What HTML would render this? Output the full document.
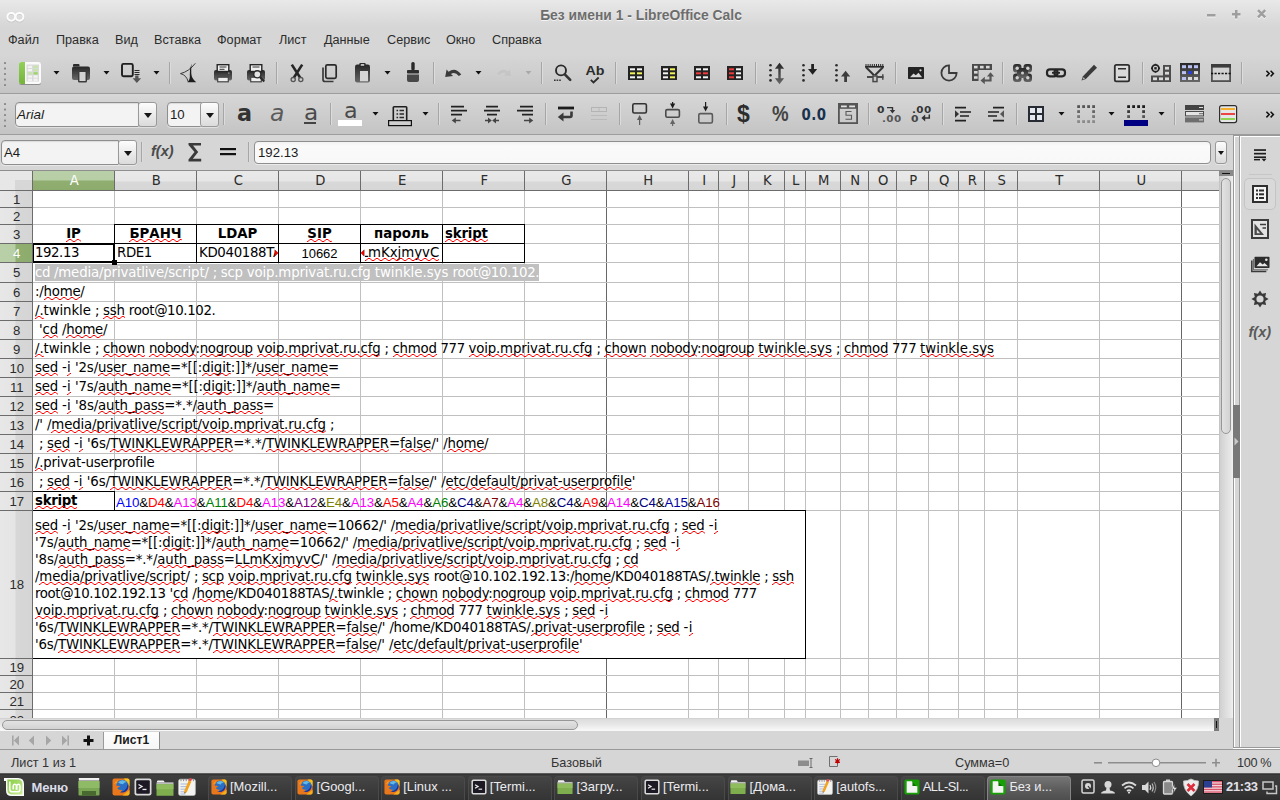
<!DOCTYPE html>
<html lang="ru">
<head>
<meta charset="utf-8">
<title>Без имени 1 - LibreOffice Calc</title>
<style>
html,body{margin:0;padding:0;width:1280px;height:800px;overflow:hidden;background:#d6d6d6;}
#root{position:relative;width:1280px;height:800px;overflow:hidden;background:#d6d6d6;
  font-family:"Liberation Sans","DejaVu Sans",sans-serif;font-size:13px;color:#2b2b2b;}
#root div,#root span,#root svg{position:absolute;box-sizing:border-box;}
#root span.i{position:static;}
.t{white-space:nowrap;line-height:1;}
.ui{font-family:"Liberation Sans","DejaVu Sans",sans-serif;font-size:13.2px;color:#2e2e2e;}
</style>
<style>
#title{left:0;top:0;width:1280px;height:28px;background:linear-gradient(#e9e9e9 0,#e3e3e3 8px,#d8d8d8 24px,#d6d6d6 28px);}
#title .cap{left:1px;width:1280px;top:8.5px;text-align:center;font-weight:bold;font-size:13.85px;color:#6d6d6d;text-shadow:0 1px 0 #f4f4f4;}
#menubar{left:0;top:28px;width:1280px;height:26px;background:#d6d6d6;}
#menubar .t{top:6px;font-size:12.65px;color:#2c2c2c;}
</style>
<style>
#tb1{left:0;top:54px;width:1280px;height:40px;background:linear-gradient(#d6d6d6 0,#d3d3d3 8px,#c9c9c9 30px,#c4c4c4 39px,#9c9c9c 39px,#9c9c9c 40px);}
#tb1 svg{left:0;top:0;}
</style>
<style>
#tb2{left:0;top:94px;width:1280px;height:41px;background:linear-gradient(#dadada 0,#d6d6d6 1px,#d3d3d3 8px,#c8c8c8 32px,#c4c4c4 40px,#9c9c9c 40px,#9c9c9c 41px);}
#tb2 svg{left:0;top:0;}
.combo{height:25px;background:#f3f3f3;border:1px solid #8e8e8e;border-radius:4px 0 0 4px;box-shadow:inset 0 1px 1px rgba(0,0,0,.10),0 1px 0 rgba(255,255,255,.45);}
.cbtn{height:25px;background:linear-gradient(#fdfdfd,#ededed 45%,#dbdbdb);border:1px solid #999;border-radius:3px;box-shadow:0 1px 0 rgba(255,255,255,.45);}
.cbtn i{position:absolute;left:50%;top:50%;margin:-2px 0 0 -4px;width:0;height:0;border-left:4px solid transparent;border-right:4px solid transparent;border-top:5px solid #151515;}
#tb2 .gl{font-family:"Liberation Sans","DejaVu Sans",sans-serif;line-height:1;white-space:nowrap;}
#tb2 .dj{font-family:"DejaVu Sans","Liberation Sans",sans-serif;}
#tb2 .sf{font-family:"Liberation Serif","DejaVu Serif",serif;}
</style>
<style>
#fbar{left:0;top:135px;width:1233px;height:35px;background:#d6d6d6;}
#fbar svg{left:0;top:0;}
#fbar .inp{left:254px;top:6px;width:957px;height:23px;background:linear-gradient(#f2f2f2,#fafafa 4px,#f8f8f8);border:1px solid #8e8e8e;border-radius:4px;box-shadow:0 1px 0 rgba(255,255,255,.5);}
</style>
<style>
#grid{left:0;top:170px;width:1219px;height:548px;background:#fff;overflow:hidden;}
#colhdr{left:0;top:0;width:1219px;height:21px;background:linear-gradient(#e9e9e9 0,#e6e6e6 10px,#d8d8d8 11px,#d6d6d6 20px);border-top:1px solid #8e8e8e;border-bottom:1px solid #6c6c6c;}
#colhdr .c{top:0;height:19px;text-align:center;text-indent:1.5px;font-size:13.2px;line-height:20px;color:#2c2c2c;border-right:1px solid #6c6c6c;}
#colhdr .sel{background:linear-gradient(#b9cfa7 0,#b8cea5 9px,#8fae70 10px,#8dab6d 19px);color:#fff;}
#rowhdr{left:0;top:21px;width:33px;height:527px;background:linear-gradient(90deg,#e7e7e7 0,#e5e5e5 15px,#d7d7d7 16px,#d5d5d5 32px);border-right:1px solid #6c6c6c;}
#corner{left:0;top:0;width:33px;height:19px;border-right:1px solid #6c6c6c;background:#e7e7e7;}
#corner i{position:absolute;left:15px;top:9px;width:17px;height:10px;background:#d7d7d7;}
#rowhdr .r{left:0;width:32px;text-align:center;text-indent:1.5px;font-size:13.2px;color:#2c2c2c;border-bottom:1px solid #6c6c6c;}
#rowhdr .sel{background:linear-gradient(90deg,#b9cfa7 0,#b8cea5 15px,#8fae70 16px,#8dab6d 32px);color:#fff;}
.gv{top:21px;width:1px;height:527px;background:#c0c0c0;}
.gh{left:33px;height:1px;width:1186px;background:#c0c0c0;}
.pb{top:21px;width:1px;height:527px;background:#666;}
</style>
<style>
#cells{left:0;top:0;width:1219px;height:718px;overflow:hidden;}
.c{font-family:"DejaVu Sans","Liberation Sans",sans-serif;font-size:13.333px;color:#000;white-space:nowrap;height:18px;line-height:18px;overflow:hidden;}
.c u,.w u{text-decoration:none;}
.b{font-weight:bold;}
.ctr{text-align:center;}
.lib{font-family:"Liberation Sans","DejaVu Sans",sans-serif;}
.bk{background:#000;}
.w{font-family:"DejaVu Sans","Liberation Sans",sans-serif;font-size:13.333px;color:#000;white-space:nowrap;line-height:17.1px;}
.hl{background:#c0c0c0;color:#fff;}
</style>
<style>
#hscroll{left:0;top:718px;width:1219px;height:13px;background:linear-gradient(#c9c9c9 0,#dcdcdc 1px,#e6e6e6 6px,#f7f7f7 12px,#f7f7f7 13px);}
#hscroll .thumb{left:2px;top:2px;width:576px;height:10px;border:1px solid #979797;border-radius:5px;background:linear-gradient(#e2e2e2,#d2d2d2);}
#hscroll .split{left:1214px;top:0;width:5px;height:13px;background:#7b7b7b;}
#hscroll .split i{position:absolute;left:2px;top:3px;width:1px;height:7px;background:#111;}
#tabbar{left:0;top:731px;width:1233px;height:19px;background:#d6d6d6;}
#stline{left:0;top:749px;width:1280px;height:1px;background:#999;}
#tabbar .tab{left:103px;top:1px;width:57px;height:17px;background:linear-gradient(#fdfdfd,#f6f6f6);border-left:1px solid #9a9a9a;border-right:1px solid #8a8a8a;box-shadow:0 1px 0 #aaa;text-align:center;font-weight:bold;font-size:12.1px;line-height:16px;color:#1a1a1a;}
#status{left:0;top:750px;width:1280px;height:23px;background:#d6d6d6;}
#status .t{top:6.5px;font-size:12.7px;color:#333;}
</style>
<style>
#vscroll{left:1219px;top:170px;width:14px;height:548px;background:linear-gradient(90deg,#b9b9b9 0,#d0d0d0 1px,#dcdcdc 6px,#e8e8e8 12px,#f2f2f2 14px);}
#vscroll .split{left:0;top:0;width:14px;height:6px;background:#8a8a8a;}
#vscroll .split i{position:absolute;left:3px;top:3px;width:8px;height:1px;background:#111;}
#vscroll .thumb{left:2px;top:8px;width:10px;height:256px;border:1px solid #979797;border-radius:5px;background:linear-gradient(90deg,#e2e2e2,#d2d2d2);}
#vsbelow{left:1219px;top:718px;width:14px;height:31px;background:#d6d6d6;}
#splitter{left:1233px;top:135px;width:7px;height:613px;background:#d6d6d6;border:1px solid #999;box-shadow:inset 1px 1px 0 #fff;}
#splitter .h{left:-1px;top:269px;width:7px;height:73px;background:#787878;}
#sidebar{left:1240px;top:135px;width:40px;height:613px;background:#d6d6d6;border-top:1px solid #999;border-bottom:1px solid #999;box-shadow:inset 1px 1px 0 #fff;}
#sbw{left:1233px;top:748px;width:47px;height:1px;background:#fff;}
#sideic{left:0;top:0;width:0;height:0;}
#sideic .act{left:1244px;top:178px;width:32px;height:32px;border:1px solid #c4c4c4;border-radius:5px;background:#d9d9d9;}
#sideic .sep{left:1249px;top:174px;width:23px;height:1px;background:#c6c6c6;}
</style>
<style>
#task{left:0;top:773px;width:1280px;height:27px;background:linear-gradient(#8a8a8a 0,#2c2c2c 1px,#3d3d3d 2px,#3a3a3a 10px,#333 20px,#2d2d2d 27px);}
#task .btn{top:3px;width:84px;height:24px;border-radius:4px 4px 0 0;background:linear-gradient(#454545,#3c3c3c 50%,#343434);border:1px solid #4a4a4a;border-bottom:none;}
#task .btn.on{background:linear-gradient(#757575,#5e5e5e 50%,#4e4e4e);border-color:#858585;}
#task .lbl{top:7.5px;font-size:12.9px;color:#ececf0;}
#task .menu{left:31.5px;top:7.5px;font-size:13px;font-weight:bold;color:#dcdce8;letter-spacing:-0.1px;}
#task .clk{left:1226px;top:7.5px;font-size:12.9px;font-weight:bold;color:#e2e2ea;letter-spacing:-0.25px;}
</style>
</head>
<body>
<div id="root">
<!-- p_chrome -->
<div id="title">
<svg style="left:5px;top:10px" width="22" height="14" viewBox="0 0 22 14"><g fill="none" stroke-width="2"><g stroke="#bdbdbd" opacity="0.7"><circle cx="6.3" cy="7.7" r="3.9"/><circle cx="14.5" cy="7.7" r="3.9"/></g><g stroke="#fcfcfc"><circle cx="6.3" cy="6.8" r="3.9"/><circle cx="14.5" cy="6.8" r="3.9"/></g></g></svg>
<div class="t cap">Без имени 1 - LibreOffice Calc</div>
<svg style="left:1200px;top:6px" width="72" height="16" viewBox="1200 6 72 16"><g fill="#f2f2f2"><rect x="1207" y="15" width="8.5" height="2.5"/><rect x="1232" y="14" width="8.5" height="2.5"/><rect x="1235" y="11" width="2.5" height="8.5"/></g><path d="M1258 11.2l7.2 7.2M1265.2 11.2l-7.2 7.2" stroke="#f2f2f2" stroke-width="2.5"/><g fill="#9e9e9e"><rect x="1207" y="14" width="8.5" height="2.5"/><rect x="1232" y="13" width="8.5" height="2.5"/><rect x="1235" y="10" width="2.5" height="8.5"/></g><path d="M1258 10.2l7.2 7.2M1265.2 10.2l-7.2 7.2" stroke="#9e9e9e" stroke-width="2.5"/></svg>
</div>
<div id="menubar">
<div class="t" style="left:8px">Файл</div>
<div class="t" style="left:56px">Правка</div>
<div class="t" style="left:115px">Вид</div>
<div class="t" style="left:154px">Вставка</div>
<div class="t" style="left:217px">Формат</div>
<div class="t" style="left:279px">Лист</div>
<div class="t" style="left:324px">Данные</div>
<div class="t" style="left:387px">Сервис</div>
<div class="t" style="left:446px">Окно</div>
<div class="t" style="left:492px">Справка</div>
</div>
<!-- p_tb1 -->
<div id="tb1"><svg width="1280" height="40" viewBox="0 54 1280 40"><defs><linearGradient id="ig" x1="0" y1="0" x2="0" y2="1"><stop offset="0" stop-color="#262626"/><stop offset="1" stop-color="#686868"/></linearGradient><linearGradient id="gg" x1="0" y1="0" x2="0" y2="1"><stop offset="0" stop-color="#93d05a"/><stop offset="1" stop-color="#74b438"/></linearGradient></defs><rect x="4" y="62" width="2" height="2" rx="0.6" fill="#8a8a8a"/><rect x="4" y="67.5" width="2" height="2" rx="0.6" fill="#8a8a8a"/><rect x="4" y="73" width="2" height="2" rx="0.6" fill="#8a8a8a"/><rect x="4" y="78.5" width="2" height="2" rx="0.6" fill="#8a8a8a"/><rect x="4" y="84" width="2" height="2" rx="0.6" fill="#8a8a8a"/><rect x="19" y="62.5" width="22" height="22.5" rx="2.5" fill="#8f8f8f"/><rect x="19" y="62" width="22" height="22" rx="2.5" fill="#fafafa"/><path d="M21.5 62h3.5v22h-3.5a2.5 2.5 0 0 1-2.5-2.5v-17a2.5 2.5 0 0 1 2.5-2.5z" fill="url(#gg)"/><rect x="26.5" y="64.5" width="12.5" height="17" fill="#d9d9d9"/><g fill="#f3f3f3"><rect x="27.8" y="65.8" width="4.2" height="2.3"/><rect x="27.8" y="69" width="4.2" height="2.3"/><rect x="27.8" y="75.4" width="4.2" height="2.3"/><rect x="27.8" y="78.6" width="4.2" height="2.3"/><rect x="33.5" y="75.4" width="4.2" height="2.3"/><rect x="33.5" y="78.6" width="4.2" height="2.3"/></g><g fill="#c5e4a8"><rect x="33.5" y="65.8" width="4.2" height="2.3"/><rect x="33.5" y="69" width="4.2" height="2.3"/><rect x="27.8" y="72.2" width="4.2" height="2.3"/></g><rect x="33.5" y="72.2" width="4.2" height="2.3" fill="#9bd468"/><path d="M53.5 71.1h6l-3 3.5z" fill="#111"/><path d="M73 66.5v-1.5a1 1 0 0 1 1-1h4.5a1 1 0 0 1 1 1v1.5z" fill="#2a2a2a"/><rect x="72" y="66.5" width="18" height="13.5" rx="2" fill="url(#ig)"/><rect x="78.7" y="71.2" width="7.6" height="10.6" rx="0.8" fill="#d4d4d4" stroke="#3c3c3c" stroke-width="1.5"/><path d="M103.5 71.1h6l-3 3.5z" fill="#111"/><rect x="122" y="63.9" width="10.8" height="12.4" rx="1.5" fill="none" stroke="#1e1e1e" stroke-width="1.9"/><path d="M134.5 70.5h5M134.5 72.5h5M134.5 74.5h5" stroke="#2a2a2a" stroke-width="1"/><path d="M135.2 75.5h3.3v2.8h2.6l-4.25 4.7l-4.25-4.7h2.6z" fill="#555"/><path d="M153.5 71.1h6l-3 3.5z" fill="#111"/><path d="M169.5 62V84" stroke="#a6a6a6" stroke-width="1"/><path d="M170.5 62V84" stroke="#dcdcdc" stroke-width="1"/><path d="M180.5 73.6Q189 71.5 195.3 63.3" fill="none" stroke="#2a2a2a" stroke-width="0.9"/><path d="M180.5 73.6Q186.5 75 188.3 82" fill="none" stroke="#2a2a2a" stroke-width="0.9"/><path d="M191.6 63.5Q189.3 69.5 189.8 74.5Q190.3 79.5 187.6 82.2L196.2 82.2Q191.5 78.5 191.3 73.5Q191.1 68.5 191.6 63.5Z" fill="#1c1c1c"/><rect x="214" y="70" width="18" height="10.5" rx="2" fill="url(#ig)"/><rect x="217.2" y="64.7" width="11.6" height="6.8" fill="#f1f1f1" stroke="#262626" stroke-width="1.4"/><path d="M219.5 67h7M219.5 69.3h5" stroke="#333" stroke-width="1"/><rect x="217.7" y="77.2" width="10.6" height="4.6" fill="#efefef" stroke="#444" stroke-width="1.2"/><rect x="228" y="72.5" width="1.5" height="1.2" fill="#999"/><rect x="247" y="70" width="18" height="10.5" rx="2" fill="url(#ig)"/><rect x="250.2" y="64.7" width="11.6" height="6.8" fill="#f1f1f1" stroke="#262626" stroke-width="1.4"/><path d="M252.5 67h7" stroke="#333" stroke-width="1"/><rect x="250.7" y="77.2" width="10.6" height="4.6" fill="#efefef" stroke="#444" stroke-width="1.2"/><circle cx="257.3" cy="74.3" r="3.6" fill="#e3e3e3" stroke="#2c2c2c" stroke-width="1.4"/><path d="M260 77.2l4.3 4.3" stroke="#2c2c2c" stroke-width="2"/><path d="M276.5 62V84" stroke="#a6a6a6" stroke-width="1"/><path d="M277.5 62V84" stroke="#dcdcdc" stroke-width="1"/><path d="M291.8 64.6l8.4 13.2M302.2 64.6l-8.4 13.2" stroke="#262626" stroke-width="2.6" fill="none"/><circle cx="293.2" cy="79.6" r="2.1" fill="none" stroke="#555" stroke-width="1.3"/><circle cx="300.8" cy="79.6" r="2.1" fill="none" stroke="#555" stroke-width="1.3"/><path d="M323 67.5v12a2 2 0 0 0 2 2h8.5" fill="none" stroke="#3a3a3a" stroke-width="1.7"/><rect x="325.8" y="64.8" width="10.4" height="13.6" rx="1.6" fill="none" stroke="#2a2a2a" stroke-width="1.7"/><rect x="355" y="64.5" width="15" height="18" rx="2.2" fill="url(#ig)"/><rect x="359.3" y="63" width="6.4" height="3.8" rx="1" fill="#2a2a2a"/><rect x="360.8" y="64.2" width="3.4" height="1.5" fill="#e4e4e4"/><rect x="360" y="71" width="8" height="10.3" fill="#d6d6d6"/><path d="M384.5 71.1h6l-3 3.5z" fill="#111"/><rect x="411.3" y="62" width="3.4" height="8.5" rx="1.5" fill="#2a2a2a"/><rect x="407" y="70" width="12" height="3.6" rx="0.8" fill="#2e2e2e"/><path d="M407 74.6h12v5.4a2 2 0 0 1-2 2h-8a2 2 0 0 1-2-2z" fill="#484848"/><path d="M433.5 62V84" stroke="#a6a6a6" stroke-width="1"/><path d="M434.5 62V84" stroke="#dcdcdc" stroke-width="1"/><path d="M445.2 77l1.4-7.4l2 2.1q6.7-5 12.7 2.8l-2.5 1.4q-3.8-4.7-7.9-2l2.2 2.2z" fill="#3a3a3a"/><path d="M475.5 71.1h6l-3 3.5z" fill="#111"/><path d="M511 76l-1.2-6.4l-1.8 1.8q-5.8-4.3-11 2.4l2.2 1.2q3.3-4 6.8-1.7l-1.9 1.9z" fill="#b0b0b0" opacity="0.3"/><path d="M525.5 71.1h6l-3 3.5z" fill="#a9a9a9"/><path d="M541.5 62V84" stroke="#a6a6a6" stroke-width="1"/><path d="M542.5 62V84" stroke="#dcdcdc" stroke-width="1"/><circle cx="561" cy="70.4" r="5" fill="none" stroke="#2a2a2a" stroke-width="1.9"/><path d="M564.8 74.3l5.4 5.6" stroke="#333" stroke-width="2.6" stroke-linecap="round"/><path d="M554 80.2h1.6M556.6 80.2h1.6M559.2 80.2h1.6" stroke="#333" stroke-width="1.5"/><text x="585.5" y="75.3" font-family="Liberation Sans, DejaVu Sans, sans-serif" font-weight="bold" font-size="12.6" fill="#2c2c2c" textLength="19" lengthAdjust="spacingAndGlyphs">Ab</text><path d="M590.8 79.8l2.7 2.7l5.2-5" fill="none" stroke="#2c2c2c" stroke-width="1.8"/><path d="M615.5 62V84" stroke="#a6a6a6" stroke-width="1"/><path d="M616.5 62V84" stroke="#dcdcdc" stroke-width="1"/><rect x="628" y="66" width="16" height="14" fill="#232323"/><rect x="630" y="68.3" width="5" height="2" fill="#f4f4f4"/><rect x="637" y="68.3" width="5" height="2" fill="#f4f4f4"/><rect x="630" y="72.3" width="5" height="2" fill="#f2f25a"/><rect x="637" y="72.3" width="5" height="2" fill="#f2f25a"/><rect x="630" y="76.3" width="5" height="2" fill="#f4f4f4"/><rect x="637" y="76.3" width="5" height="2" fill="#f4f4f4"/><rect x="661" y="66" width="16" height="14" fill="#232323"/><rect x="663" y="68.3" width="5" height="2" fill="#f4f4f4"/><rect x="670" y="68.3" width="5" height="2" fill="#f2f25a"/><rect x="663" y="72.3" width="5" height="2" fill="#f4f4f4"/><rect x="670" y="72.3" width="5" height="2" fill="#f2f25a"/><rect x="663" y="76.3" width="5" height="2" fill="#f4f4f4"/><rect x="670" y="76.3" width="5" height="2" fill="#f2f25a"/><rect x="694" y="66" width="16" height="14" fill="#232323"/><rect x="696" y="68.3" width="5" height="2" fill="#f4f4f4"/><rect x="703" y="68.3" width="5" height="2" fill="#f4f4f4"/><rect x="696" y="72.3" width="5" height="2" fill="#f03c3c"/><rect x="703" y="72.3" width="5" height="2" fill="#f03c3c"/><rect x="696" y="76.3" width="5" height="2" fill="#f4f4f4"/><rect x="703" y="76.3" width="5" height="2" fill="#f4f4f4"/><rect x="727" y="66" width="16" height="14" fill="#232323"/><rect x="729" y="68.3" width="5" height="2" fill="#f03c3c"/><rect x="736" y="68.3" width="5" height="2" fill="#f4f4f4"/><rect x="729" y="72.3" width="5" height="2" fill="#f03c3c"/><rect x="736" y="72.3" width="5" height="2" fill="#f4f4f4"/><rect x="729" y="76.3" width="5" height="2" fill="#f03c3c"/><rect x="736" y="76.3" width="5" height="2" fill="#f4f4f4"/><path d="M755.5 62V84" stroke="#a6a6a6" stroke-width="1"/><path d="M756.5 62V84" stroke="#dcdcdc" stroke-width="1"/><circle cx="770.5" cy="65.2" r="1.3" fill="#2c2c2c"/><circle cx="770.5" cy="70.2" r="1.3" fill="#2c2c2c"/><circle cx="770.5" cy="75.2" r="1.3" fill="#2c2c2c"/><circle cx="770.5" cy="80.4" r="1.3" fill="#2c2c2c"/><path d="M779.5 62.8l4.6 6h-3.4v9.4h3.4l-4.6 6l-4.6-6h3.4v-9.4h-3.4z" fill="url(#ig)"/><circle cx="803.5" cy="65.2" r="1.3" fill="#2c2c2c"/><circle cx="803.5" cy="70.2" r="1.3" fill="#2c2c2c"/><circle cx="803.5" cy="75.2" r="1.3" fill="#2c2c2c"/><circle cx="803.5" cy="80.4" r="1.3" fill="#2c2c2c"/><path d="M811.2 64h2.8v5h3.2l-4.6 5.8l-4.6-5.8h3.2z" fill="#222"/><circle cx="836.5" cy="65.2" r="1.3" fill="#2c2c2c"/><circle cx="836.5" cy="70.2" r="1.3" fill="#2c2c2c"/><circle cx="836.5" cy="75.2" r="1.3" fill="#2c2c2c"/><circle cx="836.5" cy="80.4" r="1.3" fill="#2c2c2c"/><path d="M845.6 70.8l4.6 5.8h-3.2v5.4h-2.8v-5.4h-3.2z" fill="#3c3c3c"/><path d="M865 66.8h19" stroke="#2a2a2a" stroke-width="1.7"/><path d="M866 64v2.5M868.1 64v2.5M870.2 64v2.5M872.3 64v2.5M874.4 64v2.5M876.5 64v2.5M878.6 64v2.5M880.7 64v2.5M882.8 64v2.5" stroke="#2a2a2a" stroke-width="1"/><path d="M866 67.3l8 8M883 67.3l-8 8" stroke="#333" stroke-width="2" fill="none"/><path d="M867 77h16.5" stroke="#4a4a4a" stroke-width="2"/><rect x="873" y="76" width="4" height="5.6" fill="#c8c8c8" stroke="#4a4a4a" stroke-width="1.5"/><path d="M882.8 74.3v5.5" stroke="#4a4a4a" stroke-width="1.5"/><path d="M895.5 62V84" stroke="#a6a6a6" stroke-width="1"/><path d="M896.5 62V84" stroke="#dcdcdc" stroke-width="1"/><rect x="908" y="67" width="16" height="12" rx="0.8" fill="#232323"/><path d="M910 77.3l3.5-3.8l2.3 1.8l2.7-2.6l3.6 4.6z" fill="#d6d6d6"/><circle cx="920.5" cy="70.3" r="1.1" fill="#d6d6d6"/><path d="M949 65.4A7.6 7.6 0 1 0 956.6 73H949z" fill="none" stroke="#3a3a3a" stroke-width="1.8" stroke-linejoin="miter"/><path d="M972 64h20v6h-13.5v11h-6.5z" fill="#4a4a4a"/><g fill="#d8d8d8"><rect x="974" y="65.8" width="3.6" height="2.6"/><rect x="980" y="65.8" width="3.6" height="2.6"/><rect x="986" y="65.8" width="3.6" height="2.6"/><rect x="974" y="71" width="3.6" height="2.6"/><rect x="974" y="76.2" width="3.6" height="2.6"/></g><path d="M990.5 72.2l3.6 4.2h-2.5v5.2h-6.8v2.6l-4.3-3.7l4.3-3.7v2.6h4.6v-3h-2.5z" fill="#555"/><path d="M1002.5 62V84" stroke="#a6a6a6" stroke-width="1"/><path d="M1003.5 62V84" stroke="#dcdcdc" stroke-width="1"/><g fill="url(#ig)"><rect x="1013" y="64" width="8.5" height="8.5" rx="3"/><rect x="1023.5" y="64" width="8.5" height="8.5" rx="3"/><rect x="1013" y="73.5" width="8.5" height="8.5" rx="3"/><rect x="1023.5" y="73.5" width="8.5" height="8.5" rx="3"/><rect x="1017" y="68" width="11" height="10"/></g><g fill="#d0d0d0"><circle cx="1017.2" cy="68.2" r="1.7"/><circle cx="1027.8" cy="68.2" r="1.7"/><circle cx="1017.2" cy="77.8" r="1.7"/><circle cx="1027.8" cy="77.8" r="1.7"/><circle cx="1022.5" cy="73" r="1.5"/></g><rect x="1047" y="69.3" width="10.5" height="7" rx="3" fill="none" stroke="#262626" stroke-width="2.2"/><rect x="1054.5" y="69.3" width="10.5" height="7" rx="3" fill="none" stroke="#262626" stroke-width="2.2"/><path d="M1052 72.8h8" stroke="#262626" stroke-width="1.8"/><path d="M1094 64.8l3 3l-11.2 11.2l-4.3 1.6l1.5-4.4z" fill="#3a3a3a"/><path d="M1083.6 77.2l1.4 1.4l-2.4 0.9z" fill="#c8c8c8"/><rect x="1114.8" y="64.8" width="14.4" height="16.6" rx="1.6" fill="#dadada" stroke="#2e2e2e" stroke-width="1.8"/><path d="M1118 68.7h8M1118 77.3h8" stroke="#2e2e2e" stroke-width="1.5"/><path d="M1142.5 62V84" stroke="#a6a6a6" stroke-width="1"/><path d="M1143.5 62V84" stroke="#dcdcdc" stroke-width="1"/><path d="M1163 65h8v17h-20v-6.5h12z" fill="#4c4c4c"/><g fill="#d8d8d8"><rect x="1165" y="66.8" width="4" height="2.8"/><rect x="1165" y="71.8" width="4" height="2.8"/><rect x="1165" y="77.4" width="4" height="2.8"/><rect x="1159" y="77.4" width="4" height="2.8"/><rect x="1153" y="77.4" width="4" height="2.8"/></g><circle cx="1155.5" cy="68.3" r="3.4" fill="#d0d0d0" stroke="#222" stroke-width="1.7"/><path d="M1155.5 63.8v1.2M1155.5 71.6v1.2M1151 68.3h1.2M1158.8 68.3h1.2" stroke="#222" stroke-width="1.4"/><rect x="1154.3" y="67.1" width="2.4" height="2.4" fill="#222"/><rect x="1180" y="63" width="20" height="19" fill="url(#ig)"/><rect x="1182" y="65.2" width="4" height="3" fill="#b9c0f2"/><rect x="1188" y="65.2" width="4" height="3" fill="#b9c0f2"/><rect x="1194" y="65.2" width="4" height="3" fill="#b9c0f2"/><rect x="1182" y="71.1" width="4" height="3" fill="#b9c0f2"/><rect x="1188" y="71.1" width="4" height="3" fill="#2b3fd0"/><rect x="1194" y="71.1" width="4" height="3" fill="#dadada"/><rect x="1182" y="77" width="4" height="3" fill="#b9c0f2"/><rect x="1188" y="77" width="4" height="3" fill="#dadada"/><rect x="1194" y="77" width="4" height="3" fill="#dadada"/><rect x="1211.9" y="64.9" width="18.2" height="16.2" fill="#d2d2d2" stroke="#505050" stroke-width="1.8"/><rect x="1211" y="64" width="20" height="3.6" fill="#3c3c3c"/><path d="M1211 73.5h20" stroke="#111" stroke-width="1.3" stroke-dasharray="2.2 1.3"/><path d="M1241.5 62V84" stroke="#a6a6a6" stroke-width="1"/><path d="M1242.5 62V84" stroke="#dcdcdc" stroke-width="1"/><path d="M1266.4 70.8l2.8 2.8l-2.8 2.8M1270.6 70.8l2.8 2.8l-2.8 2.8" fill="none" stroke="#111" stroke-width="1.5"/></svg></div>
<!-- p_tb2 -->
<div id="tb2"><svg width="1280" height="41" viewBox="0 94 1280 41"><rect x="4" y="103" width="2" height="2" rx="0.6" fill="#8a8a8a"/><rect x="4" y="108.5" width="2" height="2" rx="0.6" fill="#8a8a8a"/><rect x="4" y="114" width="2" height="2" rx="0.6" fill="#8a8a8a"/><rect x="4" y="119.5" width="2" height="2" rx="0.6" fill="#8a8a8a"/><rect x="4" y="125" width="2" height="2" rx="0.6" fill="#8a8a8a"/><path d="M223.5 103V125" stroke="#a6a6a6" stroke-width="1"/><path d="M224.5 103V125" stroke="#dcdcdc" stroke-width="1"/><path d="M330.5 103V125" stroke="#a6a6a6" stroke-width="1"/><path d="M331.5 103V125" stroke="#dcdcdc" stroke-width="1"/><rect x="338" y="120" width="24" height="6" fill="#ffffff"/><path d="M372.5 112.1h6l-3 3.5z" fill="#111"/><rect x="393.3" y="106.8" width="13.4" height="14" rx="0.8" fill="none" stroke="#1e1e1e" stroke-width="1.6"/><path d="M396.5 110.5h1.6M399.5 110.5h4.5M396.5 114h1.6M399.5 114h4.5M396.5 117.5h1.6M399.5 117.5h4.5" stroke="#2a2a2a" stroke-width="1.5"/><rect x="388.6" y="120.6" width="22.8" height="5" fill="#d0d0d0" stroke="#111" stroke-width="1.2"/><path d="M422.5 112.1h6l-3 3.5z" fill="#111"/><path d="M438.5 103V125" stroke="#a6a6a6" stroke-width="1"/><path d="M439.5 103V125" stroke="#dcdcdc" stroke-width="1"/><path d="M451 106.6H464M451 110.6H467M451 114.6H462" stroke="#222" stroke-width="1.9" fill="none"/><path d="M454 120.5h6.5" stroke="#444" stroke-width="1.5" fill="none"/><path d="M455.8 117.5v6l-4-3z" fill="#444"/><path d="M486 106.6H498M484 110.6H500M487 114.6H497" stroke="#222" stroke-width="1.9" fill="none"/><path d="M485 120.5h4M499 120.5h-4" stroke="#444" stroke-width="1.5" fill="none"/><path d="M488 117.5v6l3.8-3zM496 117.5v6l-3.8-3z" fill="#444"/><path d="M520 106.6H533M517 110.6H533M522 114.6H533" stroke="#222" stroke-width="1.9" fill="none"/><path d="M524 120.5h6.5" stroke="#444" stroke-width="1.5" fill="none"/><path d="M529.2 117.5v6l4-3z" fill="#444"/><path d="M545.5 103V125" stroke="#a6a6a6" stroke-width="1"/><path d="M546.5 103V125" stroke="#dcdcdc" stroke-width="1"/><path d="M558 108h16" stroke="#1c1c1c" stroke-width="2.8"/><path d="M571.5 111.5v4a1.5 1.5 0 0 1-1.5 1.5h-7" fill="none" stroke="#3a3a3a" stroke-width="2.6"/><path d="M563.5 112.5v9l-5.7-4.5z" fill="#3a3a3a"/><rect x="591.5" y="107.5" width="15" height="4" fill="none" stroke="#b4b4b4" stroke-width="1"/><path d="M599 107.5v4M591 115.5h16M591 119.5h16" stroke="#b8b8b8" stroke-width="0.9"/><path d="M619.5 103V125" stroke="#a6a6a6" stroke-width="1"/><path d="M620.5 103V125" stroke="#dcdcdc" stroke-width="1"/><rect x="632.8" y="103.8" width="13.6" height="9.2" rx="1.5" fill="none" stroke="#333" stroke-width="1.6"/><path d="M639.6 125v-6" stroke="#5c5c5c" stroke-width="1.2"/><path d="M639.6 115l2.6 5h-5.2z" fill="#5c5c5c"/><rect x="665.8" y="109.6" width="13.6" height="7.6" rx="1.5" fill="none" stroke="#4a4a4a" stroke-width="1.6"/><path d="M672.6 108.4l2.6-5h-5.2z" fill="#1c1c1c"/><path d="M672.6 102v3" stroke="#1c1c1c" stroke-width="1.2"/><path d="M672.6 119l2.6 5h-5.2z" fill="#666"/><path d="M672.6 123v3" stroke="#666" stroke-width="1.2"/><rect x="698.8" y="113.6" width="13.6" height="9.4" rx="1.5" fill="none" stroke="#5a5a5a" stroke-width="1.6"/><path d="M705.6 102v5" stroke="#1c1c1c" stroke-width="1.2"/><path d="M705.6 111.5l2.6-5h-5.2z" fill="#1c1c1c"/><path d="M726.5 103V125" stroke="#a6a6a6" stroke-width="1"/><path d="M727.5 103V125" stroke="#dcdcdc" stroke-width="1"/><rect x="838.9" y="103.9" width="18.2" height="19.2" fill="none" stroke="#555" stroke-width="1.8"/><rect x="839" y="104" width="18" height="4.8" fill="#555"/><rect x="841" y="105.5" width="5.8" height="1.8" fill="#e2e2e2"/><rect x="849.2" y="105.5" width="5.8" height="1.8" fill="#e2e2e2"/><path d="M851.5 111.5h-5.5v3.8h5.5v4h-6" fill="none" stroke="#5a5a5a" stroke-width="1.1"/><path d="M868.5 103V125" stroke="#a6a6a6" stroke-width="1"/><path d="M869.5 103V125" stroke="#dcdcdc" stroke-width="1"/><path d="M887 107.6h5.5v3" fill="none" stroke="#333" stroke-width="1.4"/><path d="M889.8 110l2.7 3.4l2.7-3.4z" fill="#333"/><path d="M929.3 114.5v3.5h-5" fill="none" stroke="#333" stroke-width="1.5"/><path d="M925.2 114.6v6.8l-3.8-3.4z" fill="#333"/><path d="M942.5 103V125" stroke="#a6a6a6" stroke-width="1"/><path d="M943.5 103V125" stroke="#dcdcdc" stroke-width="1"/><path d="M955 107.6H966M960 112H971M960 116H969M955 120.6H966" stroke="#222" stroke-width="1.7" fill="none"/><path d="M955 110.2l4 3.8l-4 3.8z" fill="#333"/><path d="M993 107.6H1004M988 112H999M988 116H997M993 120.6H1004" stroke="#222" stroke-width="1.7" fill="none"/><path d="M1004 110.2l-4 3.8l4 3.8z" fill="#555"/><path d="M1016.5 103V125" stroke="#a6a6a6" stroke-width="1"/><path d="M1017.5 103V125" stroke="#dcdcdc" stroke-width="1"/><rect x="1028" y="106" width="16" height="16" fill="#272c34"/><g fill="#e4e8ee"><rect x="1030" y="108" width="5" height="5"/><rect x="1037" y="108" width="5" height="5"/><rect x="1030" y="115" width="5" height="5"/><rect x="1037" y="115" width="5" height="5"/></g><path d="M1058.5 112.1h6l-3 3.5z" fill="#111"/><rect x="1077.2" y="105.2" width="2.8" height="2.8" fill="#555"/><rect x="1077.2" y="110.2" width="2.8" height="2.8" fill="#666"/><rect x="1077.2" y="115.2" width="2.8" height="2.8" fill="#777"/><rect x="1077.2" y="120.2" width="2.8" height="2.8" fill="#8a8a8a"/><rect x="1082.2" y="105.2" width="2.8" height="2.8" fill="#555"/><rect x="1082.2" y="120.2" width="2.8" height="2.8" fill="#8a8a8a"/><rect x="1087.2" y="105.2" width="2.8" height="2.8" fill="#555"/><rect x="1087.2" y="120.2" width="2.8" height="2.8" fill="#8a8a8a"/><rect x="1092.2" y="105.2" width="2.8" height="2.8" fill="#555"/><rect x="1092.2" y="110.2" width="2.8" height="2.8" fill="#666"/><rect x="1092.2" y="115.2" width="2.8" height="2.8" fill="#777"/><rect x="1092.2" y="120.2" width="2.8" height="2.8" fill="#8a8a8a"/><path d="M1108.5 112.1h6l-3 3.5z" fill="#111"/><rect x="1127.2" y="105.2" width="2.8" height="2.8" fill="#1c1c1c"/><rect x="1127.2" y="110.2" width="2.8" height="2.8" fill="#3a3a3a"/><rect x="1127.2" y="115.2" width="2.8" height="2.8" fill="#555"/><rect x="1132.2" y="105.2" width="2.8" height="2.8" fill="#1c1c1c"/><rect x="1137.2" y="105.2" width="2.8" height="2.8" fill="#1c1c1c"/><rect x="1142.2" y="105.2" width="2.8" height="2.8" fill="#1c1c1c"/><rect x="1142.2" y="110.2" width="2.8" height="2.8" fill="#3a3a3a"/><rect x="1142.2" y="115.2" width="2.8" height="2.8" fill="#555"/><rect x="1124" y="120" width="24" height="6" fill="#000080"/><path d="M1158.5 112.1h6l-3 3.5z" fill="#111"/><path d="M1174.5 103V125" stroke="#a6a6a6" stroke-width="1"/><path d="M1175.5 103V125" stroke="#dcdcdc" stroke-width="1"/><rect x="1185" y="105" width="19" height="5" fill="#444"/><rect x="1199" y="107" width="4" height="1" fill="#ddd"/><rect x="1185.5" y="111.5" width="18" height="4.4" fill="#e4e4e4" stroke="#4a4a4a" stroke-width="1"/><rect x="1199" y="113.2" width="4" height="1" fill="#666"/><rect x="1185" y="117.4" width="19" height="5" fill="#6e6e6e"/><rect x="1199" y="119.4" width="4" height="1" fill="#ddd"/><rect x="1219.6" y="105.6" width="17" height="17" rx="2" fill="#e6e6e6" stroke="#2e2e2e" stroke-width="1.2"/><rect x="1221" y="108" width="14" height="2" fill="#f6ae2d"/><rect x="1221" y="113" width="14" height="2" fill="#ec4545"/><rect x="1221" y="118" width="14" height="2" fill="#8fd450"/><path d="M1266.4 111.8l2.8 2.8l-2.8 2.8M1270.6 111.8l2.8 2.8l-2.8 2.8" fill="none" stroke="#111" stroke-width="1.5"/></svg>
<div class="combo" style="left:15px;top:8px;width:124px"></div>
<div class="cbtn" style="left:138px;top:8px;width:19px"><i></i></div>
<div class="t" style="left:17px;top:13.5px;font-style:italic;font-size:13.5px;color:#1c1c1c">Arial</div>
<div class="combo" style="left:167px;top:8px;width:35px"></div>
<div class="cbtn" style="left:200px;top:8px;width:19px"><i></i></div>
<div class="t" style="left:170px;top:14px;font-size:13.2px;color:#1c1c1c">10</div>
<div class="gl dj" style="left:236.6px;top:7.6px;font-size:23px;font-weight:bold;color:#333;transform:scaleX(0.97);transform-origin:0 0">a</div>
<div class="gl dj" style="left:270px;top:7.6px;font-size:23px;font-style:italic;color:#5a5a5a;transform:scaleX(1.02);transform-origin:0 0">a</div>
<div class="gl dj" style="left:303.5px;top:8px;font-size:21.5px;color:#4a4a4a;transform:scaleX(1.08);transform-origin:0 0">a</div>
<div style="left:304px;top:28px;width:12px;height:2px;background:#444"></div>
<div class="gl dj" style="left:343.5px;top:6.5px;font-size:20.5px;color:#4a4a4a;transform:scaleX(1.08);transform-origin:0 0">a</div>
<div class="gl" style="left:737px;top:9px;font-size:23px;font-weight:bold;color:#2c2c2c">$</div>
<div class="gl" style="left:771.5px;top:9px;font-size:22.5px;font-weight:bold;color:#444;transform:scaleX(0.83);transform-origin:0 0">%</div>
<div class="gl dj" style="left:801.5px;top:14px;font-size:13.3px;font-weight:bold;color:#17314f;letter-spacing:0.5px;transform:scaleY(1.17);transform-origin:0 50%">0.0</div>
<div class="gl dj" style="left:877.3px;top:11px;font-size:9.8px;font-weight:bold;color:#333;transform:scale(1.1,0.92);transform-origin:0 50%">0</div>
<div class="gl dj" style="left:881.5px;top:19.5px;font-size:9.8px;font-weight:bold;color:#555;letter-spacing:0.35px;transform:scale(1.06,0.92);transform-origin:0 50%">.00</div>
<div class="gl dj" style="left:912.3px;top:10.5px;font-size:9.8px;font-weight:bold;color:#333;letter-spacing:0.35px;transform:scale(1.06,0.92);transform-origin:0 50%">.00</div>
<div class="gl dj" style="left:910.5px;top:20px;font-size:9.8px;font-weight:bold;color:#444;transform:scale(1.1,0.92);transform-origin:0 50%">0</div>
</div>
<!-- p_fbar -->
<div id="fbar"><svg width="1233" height="35" viewBox="0 135 1233 35"><path d="M141.5 142V162" stroke="#a6a6a6" stroke-width="1"/><path d="M142.5 142V162" stroke="#dcdcdc" stroke-width="1"/><path d="M248.5 142V162" stroke="#a6a6a6" stroke-width="1"/><path d="M249.5 142V162" stroke="#dcdcdc" stroke-width="1"/><path d="M188.5 143h12.5v2.6h-8l5.2 6.4l-5.4 6.8h8.4v2.6h-12.7v-2l6-7.5l-6-7z" fill="#3a3a3a"/><rect x="220" y="148" width="16" height="2.2" fill="#111"/><rect x="220" y="153" width="16" height="2.2" fill="#111"/></svg>
<div class="combo" style="left:1px;top:5px;width:118px"></div>
<div class="cbtn" style="left:118px;top:5px;width:19px"><i></i></div>
<div class="t" style="left:4px;top:11px;font-size:13.2px;color:#1c1c1c">A4</div>
<div class="t" style="left:151px;top:9px;font-size:14.5px;font-style:italic;font-weight:bold;color:#4a4a4a;letter-spacing:0">f(x)</div>
<div class="inp"></div>
<div class="t" style="left:258px;top:11px;font-size:13.2px;color:#1c1c1c">192.13</div>
<div class="cbtn" style="left:1215px;top:6px;width:12px;height:23px"><i style="margin-left:-3px;border-left-width:3px;border-right-width:3px;border-top-width:4px"></i></div>
</div>
<!-- p_grid -->
<div id="grid">
<div id="colhdr">
<div id="corner"><i></i></div>
<div class="c sel" style="left:33px;width:82px">A</div>
<div class="c" style="left:115px;width:82px">B</div>
<div class="c" style="left:197px;width:82px">C</div>
<div class="c" style="left:279px;width:82px">D</div>
<div class="c" style="left:361px;width:82px">E</div>
<div class="c" style="left:443px;width:82px">F</div>
<div class="c" style="left:525px;width:82px">G</div>
<div class="c" style="left:607px;width:82px">H</div>
<div class="c" style="left:689px;width:30px">I</div>
<div class="c" style="left:719px;width:30px">J</div>
<div class="c" style="left:749px;width:36px">K</div>
<div class="c" style="left:785px;width:21px">L</div>
<div class="c" style="left:806px;width:35px">M</div>
<div class="c" style="left:841px;width:28px">N</div>
<div class="c" style="left:869px;width:28px">O</div>
<div class="c" style="left:897px;width:32px">P</div>
<div class="c" style="left:929px;width:30px">Q</div>
<div class="c" style="left:959px;width:26px">R</div>
<div class="c" style="left:985px;width:33px">S</div>
<div class="c" style="left:1018px;width:82px">T</div>
<div class="c" style="left:1100px;width:82px">U</div>
</div>
<div class="gv" style="left:114px"></div>
<div class="gv" style="left:196px"></div>
<div class="gv" style="left:278px"></div>
<div class="gv" style="left:360px"></div>
<div class="gv" style="left:442px"></div>
<div class="gv" style="left:524px"></div>
<div class="pb" style="left:606px"></div>
<div class="gv" style="left:688px"></div>
<div class="gv" style="left:718px"></div>
<div class="gv" style="left:748px"></div>
<div class="gv" style="left:784px"></div>
<div class="gv" style="left:805px"></div>
<div class="gv" style="left:840px"></div>
<div class="gv" style="left:868px"></div>
<div class="gv" style="left:896px"></div>
<div class="gv" style="left:928px"></div>
<div class="gv" style="left:958px"></div>
<div class="gv" style="left:984px"></div>
<div class="gv" style="left:1017px"></div>
<div class="gv" style="left:1099px"></div>
<div class="pb" style="left:1181px"></div>
<div class="gh" style="top:37px"></div>
<div class="gh" style="top:54px"></div>
<div class="gh" style="top:73px"></div>
<div class="gh" style="top:92px"></div>
<div class="gh" style="top:112px"></div>
<div class="gh" style="top:131px"></div>
<div class="gh" style="top:150px"></div>
<div class="gh" style="top:169px"></div>
<div class="gh" style="top:188px"></div>
<div class="gh" style="top:207px"></div>
<div class="gh" style="top:226px"></div>
<div class="gh" style="top:245px"></div>
<div class="gh" style="top:264px"></div>
<div class="gh" style="top:283px"></div>
<div class="gh" style="top:302px"></div>
<div class="gh" style="top:321px"></div>
<div class="gh" style="top:340px"></div>
<div class="gh" style="top:488px"></div>
<div class="gh" style="top:505px"></div>
<div class="gh" style="top:522px"></div>
<div class="gh" style="top:539px"></div>
<div id="rowhdr">
<div class="r" style="top:0px;height:17px;line-height:17px">1</div>
<div class="r" style="top:17px;height:17px;line-height:17px">2</div>
<div class="r" style="top:34px;height:19px;line-height:19px">3</div>
<div class="r sel" style="top:53px;height:19px;line-height:19px">4</div>
<div class="r" style="top:72px;height:20px;line-height:20px">5</div>
<div class="r" style="top:92px;height:19px;line-height:19px">6</div>
<div class="r" style="top:111px;height:19px;line-height:19px">7</div>
<div class="r" style="top:130px;height:19px;line-height:19px">8</div>
<div class="r" style="top:149px;height:19px;line-height:19px">9</div>
<div class="r" style="top:168px;height:19px;line-height:19px">10</div>
<div class="r" style="top:187px;height:19px;line-height:19px">11</div>
<div class="r" style="top:206px;height:19px;line-height:19px">12</div>
<div class="r" style="top:225px;height:19px;line-height:19px">13</div>
<div class="r" style="top:244px;height:19px;line-height:19px">14</div>
<div class="r" style="top:263px;height:19px;line-height:19px">15</div>
<div class="r" style="top:282px;height:19px;line-height:19px">16</div>
<div class="r" style="top:301px;height:19px;line-height:19px">17</div>
<div class="r" style="top:320px;height:148px;line-height:148px">18</div>
<div class="r" style="top:468px;height:17px;line-height:17px">19</div>
<div class="r" style="top:485px;height:17px;line-height:17px">20</div>
<div class="r" style="top:502px;height:17px;line-height:17px">21</div>
<div class="r" style="top:519px;height:21px;line-height:21px">22</div>
</div>
</div>
<!-- p_cells -->
<div id="cells">
<div style="left:33px;top:511px;width:772px;height:147px;background:#fff"></div>
<div class="c ctr b" style="left:33px;top:225px;width:81px;"><u>IP</u></div>
<div class="c ctr b" style="left:115px;top:225px;width:81px;"><u>БРАНЧ</u></div>
<div class="c ctr b" style="left:197px;top:225px;width:81px;">LDAP</div>
<div class="c ctr b" style="left:279px;top:225px;width:81px;"><u>SIP</u></div>
<div class="c ctr b" style="left:361px;top:225px;width:81px;">пароль</div>
<div class="c b" style="left:445px;top:225px;width:78px;letter-spacing:-0.2px"><u>skript</u></div>
<div class="c " style="left:35px;top:244px;width:78px;"><span class="i" style="letter-spacing:-0.44px">192.13</span></div>
<div class="c " style="left:117px;top:244px;width:78px;"><span class="i" style="letter-spacing:-0.36px">RDE1</span></div>
<div class="c " style="left:199px;top:244px;width:76px;"><span class="i" style="letter-spacing:-0.33px">KD040188TAS</span></div>
<div class="c ctr lib" style="left:279px;top:244px;width:81px;font-size:13px;padding-top:1px">10662</div>
<div class="c" style="left:365px;top:244px;width:76px"><div style="right:1.8px;top:0;height:18px;white-space:nowrap"><span class="i" style="letter-spacing:-0.03px"><u>LLmKxjmyvC</u></span></div></div>
<div class="c" style="left:35px;top:264px;height:18px"><span class="i hl r5" style="display:inline-block;height:17px;line-height:18px;margin-top:0;vertical-align:top"><span class="i" style="letter-spacing:-0.35px">cd </span><span class="i" style="letter-spacing:-0.17px">/media/privatlive/script/ </span><span class="i" style="letter-spacing:-0.37px">; </span><span class="i" style="letter-spacing:-0.25px">scp </span><span class="i" style="letter-spacing:-0.18px">voip.mprivat.ru.cfg </span><span class="i" style="letter-spacing:-0.02px">twinkle.sys </span><span class="i" style="letter-spacing:-0.36px">root@10.102.</span></span></div>
<div class="c r6" style="left:35px;top:283px;width:1184px;"><span class="i" style="letter-spacing:-0.24px">:/<u>home</u>/</span></div>
<div class="c r7" style="left:35px;top:302px;width:1184px;"><span class="i" style="letter-spacing:-0.10px"><u>/.</u>twinkle </span><span class="i" style="letter-spacing:-0.37px">; </span><span class="i" style="letter-spacing:-0.15px"><u>ssh</u> </span><span class="i" style="letter-spacing:-0.36px">root@10.102.</span></div>
<div class="c r8" style="left:35px;top:321px;width:1184px;"><span class="i" style="letter-spacing:-0.17px">&nbsp;'<u>cd</u> </span><span class="i" style="letter-spacing:-0.27px">/<u>home</u>/</span></div>
<div class="c r9" style="left:35px;top:340px;width:1184px;"><span class="i" style="letter-spacing:-0.09px"><u>/.</u>twinkle </span><span class="i" style="letter-spacing:-0.37px">; </span><span class="i" style="letter-spacing:-0.26px"><u>chown</u> </span><span class="i" style="letter-spacing:-0.33px"><u>nobody</u>:<u>nogroup</u> </span><span class="i" style="letter-spacing:-0.18px"><u>voip.mprivat.ru.cfg</u> </span><span class="i" style="letter-spacing:-0.37px">; </span><span class="i" style="letter-spacing:-0.27px"><u>chmod</u> </span><span class="i" style="letter-spacing:-0.42px">777 </span><span class="i" style="letter-spacing:-0.18px"><u>voip.mprivat.ru.cfg</u> </span><span class="i" style="letter-spacing:-0.37px">; </span><span class="i" style="letter-spacing:-0.26px"><u>chown</u> </span><span class="i" style="letter-spacing:-0.33px"><u>nobody</u>:<u>nogroup</u> </span><span class="i" style="letter-spacing:-0.02px"><u>twinkle.sys</u> </span><span class="i" style="letter-spacing:-0.37px">; </span><span class="i" style="letter-spacing:-0.27px"><u>chmod</u> </span><span class="i" style="letter-spacing:-0.42px">777 </span><span class="i" style="letter-spacing:0.00px"><u>twinkle.sys</u></span></div>
<div class="c r10" style="left:35px;top:359px;width:1184px;"><span class="i" style="letter-spacing:-0.21px"><u>sed</u> </span><span class="i" style="letter-spacing:0.08px">-<u>i</u> </span><span class="i" style="letter-spacing:-0.16px">'2s/<u>user_name</u>=*[[:<u>digit</u>:]]*/<u>user_name</u>=</span></div>
<div class="c r11" style="left:35px;top:378px;width:1184px;"><span class="i" style="letter-spacing:-0.21px"><u>sed</u> </span><span class="i" style="letter-spacing:0.08px">-<u>i</u> </span><span class="i" style="letter-spacing:-0.18px">'7s/<u>auth_name</u>=*[[:<u>digit</u>:]]*/<u>auth_name</u>=</span></div>
<div class="c r12" style="left:35px;top:397px;width:1184px;"><span class="i" style="letter-spacing:-0.21px"><u>sed</u> </span><span class="i" style="letter-spacing:0.08px">-<u>i</u> </span><span class="i" style="letter-spacing:-0.14px">'8s/<u>auth_pass</u>=*.*/<u>auth_pass</u>=</span></div>
<div class="c r13" style="left:35px;top:416px;width:1184px;"><span class="i" style="letter-spacing:-0.13px">/' </span><span class="i" style="letter-spacing:-0.17px">/<u>media/privatlive/script/voip.mprivat.ru.cfg</u> </span><span class="i" style="letter-spacing:-0.49px">;</span></div>
<div class="c r14" style="left:35px;top:435px;width:1184px;"><span class="i" style="letter-spacing:-0.32px">&nbsp;; </span><span class="i" style="letter-spacing:-0.21px"><u>sed</u> </span><span class="i" style="letter-spacing:0.08px">-<u>i</u> </span><span class="i" style="letter-spacing:-0.11px">'6s/<u>TWINKLEWRAPPER</u>=*.*/<u>TWINKLEWRAPPER</u>=<u>false</u>/' </span><span class="i" style="letter-spacing:-0.29px">/<u>home</u>/</span></div>
<div class="c r15" style="left:35px;top:454px;width:1184px;"><span class="i" style="letter-spacing:-0.21px"><u>/.</u>privat-userprofile</span></div>
<div class="c r16" style="left:35px;top:473px;width:1184px;"><span class="i" style="letter-spacing:-0.34px">&nbsp;; </span><span class="i" style="letter-spacing:-0.24px"><u>sed</u> </span><span class="i" style="letter-spacing:0.07px">-<u>i</u> </span><span class="i" style="letter-spacing:-0.15px">'6s/<u>TWINKLEWRAPPER</u>=*.*/<u>TWINKLEWRAPPER</u>=<u>false</u>/' </span><span class="i" style="letter-spacing:-0.18px">/<u>etc/default/privat-userprofile</u>'</span></div>
<div class="c b" style="left:35px;top:492px;width:78px;letter-spacing:-0.3px"><u>skript</u></div>
<div class="c lib" style="left:116px;top:494px;width:700px;font-size:13.333px;letter-spacing:-0.153px"><span class="i" style="color:#0000ff">A10</span>&amp;<span class="i" style="color:#ff0000">D4</span>&amp;<span class="i" style="color:#ff00ff">A13</span>&amp;<span class="i" style="color:#008000">A11</span>&amp;<span class="i" style="color:#ff0000">D4</span>&amp;<span class="i" style="color:#ff00ff">A13</span>&amp;<span class="i" style="color:#800080">A12</span>&amp;<span class="i" style="color:#808000">E4</span>&amp;<span class="i" style="color:#ff00ff">A13</span>&amp;<span class="i" style="color:#ff0000">A5</span>&amp;<span class="i" style="color:#ff00ff">A4</span>&amp;<span class="i" style="color:#008000">A6</span>&amp;<span class="i" style="color:#000080">C4</span>&amp;<span class="i" style="color:#800000">A7</span>&amp;<span class="i" style="color:#ff00ff">A4</span>&amp;<span class="i" style="color:#808000">A8</span>&amp;<span class="i" style="color:#000080">C4</span>&amp;<span class="i" style="color:#ff0000">A9</span>&amp;<span class="i" style="color:#ff00ff">A14</span>&amp;<span class="i" style="color:#000080">C4</span>&amp;<span class="i" style="color:#0000a0">A15</span>&amp;<span class="i" style="color:#800000">A16</span></div>
<div class="c w l1" style="left:35px;top:517px;width:768px;height:18px;line-height:18px"><span class="i" style="letter-spacing:-0.22px"><u>sed</u> </span><span class="i" style="letter-spacing:0.08px">-<u>i</u> </span><span class="i" style="letter-spacing:-0.20px">'2s/<u>user_name</u>=*[[:<u>digit</u>:]]*/<u>user_name</u>=10662/' </span><span class="i" style="letter-spacing:-0.17px">/<u>media/privatlive/script/voip.mprivat.ru.cfg</u> </span><span class="i" style="letter-spacing:-0.37px">; </span><span class="i" style="letter-spacing:-0.22px"><u>sed</u> </span><span class="i" style="letter-spacing:0.24px">-<u>i</u></span></div>
<div class="c w l2" style="left:35px;top:534px;width:768px;height:18px;line-height:18px"><span class="i" style="letter-spacing:-0.21px">'7s/<u>auth_name</u>=*[[:<u>digit</u>:]]*/<u>auth_name</u>=10662/' </span><span class="i" style="letter-spacing:-0.17px">/<u>media/privatlive/script/voip.mprivat.ru.cfg</u> </span><span class="i" style="letter-spacing:-0.37px">; </span><span class="i" style="letter-spacing:-0.22px"><u>sed</u> </span><span class="i" style="letter-spacing:0.24px">-<u>i</u></span></div>
<div class="c w l3" style="left:35px;top:551px;width:768px;height:18px;line-height:18px"><span class="i" style="letter-spacing:-0.11px">'8s/<u>auth_pass</u>=*.*/<u>auth_pass</u>=<u>LLmKxjmyvC</u>/' </span><span class="i" style="letter-spacing:-0.16px">/<u>media/privatlive/script/voip.mprivat.ru.cfg</u> </span><span class="i" style="letter-spacing:-0.36px">; </span><span class="i" style="letter-spacing:-0.39px"><u>cd</u></span></div>
<div class="c w l4" style="left:35px;top:568px;width:768px;height:18px;line-height:18px"><span class="i" style="letter-spacing:-0.17px">/<u>media/privatlive/script</u>/ </span><span class="i" style="letter-spacing:-0.37px">; </span><span class="i" style="letter-spacing:-0.25px"><u>scp</u> </span><span class="i" style="letter-spacing:-0.18px"><u>voip.mprivat.ru.cfg</u> </span><span class="i" style="letter-spacing:-0.02px"><u>twinkle.sys</u> </span><span class="i" style="letter-spacing:-0.30px">root@10.102.192.13:/<u>home</u>/KD040188TAS/<u>.twinkle</u> </span><span class="i" style="letter-spacing:-0.37px">; </span><span class="i" style="letter-spacing:-0.12px"><u>ssh</u></span></div>
<div class="c w l5" style="left:35px;top:585px;width:768px;height:18px;line-height:18px"><span class="i" style="letter-spacing:-0.39px">root@10.102.192.13 </span><span class="i" style="letter-spacing:-0.19px">'<u>cd</u> </span><span class="i" style="letter-spacing:-0.25px">/<u>home</u>/KD040188TAS<u>/.</u>twinkle </span><span class="i" style="letter-spacing:-0.37px">; </span><span class="i" style="letter-spacing:-0.27px"><u>chown</u> </span><span class="i" style="letter-spacing:-0.35px"><u>nobody</u>:<u>nogroup</u> </span><span class="i" style="letter-spacing:-0.19px"><u>voip.mprivat.ru.cfg</u> </span><span class="i" style="letter-spacing:-0.37px">; </span><span class="i" style="letter-spacing:-0.29px"><u>chmod</u> </span><span class="i" style="letter-spacing:-0.50px">777</span></div>
<div class="c w l6" style="left:35px;top:602px;width:768px;height:18px;line-height:18px"><span class="i" style="letter-spacing:-0.18px"><u>voip.mprivat.ru.cfg</u> </span><span class="i" style="letter-spacing:-0.37px">; </span><span class="i" style="letter-spacing:-0.26px"><u>chown</u> </span><span class="i" style="letter-spacing:-0.33px"><u>nobody</u>:<u>nogroup</u> </span><span class="i" style="letter-spacing:-0.02px"><u>twinkle.sys</u> </span><span class="i" style="letter-spacing:-0.37px">; </span><span class="i" style="letter-spacing:-0.28px"><u>chmod</u> </span><span class="i" style="letter-spacing:-0.43px">777 </span><span class="i" style="letter-spacing:-0.02px"><u>twinkle.sys</u> </span><span class="i" style="letter-spacing:-0.37px">; </span><span class="i" style="letter-spacing:-0.22px"><u>sed</u> </span><span class="i" style="letter-spacing:0.24px">-<u>i</u></span></div>
<div class="c w l7" style="left:35px;top:619px;width:768px;height:18px;line-height:18px"><span class="i" style="letter-spacing:-0.15px">'6s/<u>TWINKLEWRAPPER</u>=*.*/<u>TWINKLEWRAPPER</u>=<u>false</u>/' </span><span class="i" style="letter-spacing:-0.26px">/home/KD040188TAS/<u>.privat-userprofile</u> </span><span class="i" style="letter-spacing:-0.38px">; </span><span class="i" style="letter-spacing:-0.24px"><u>sed</u> </span><span class="i" style="letter-spacing:0.22px">-<u>i</u></span></div>
<div class="c w l8" style="left:35px;top:636px;width:768px;height:18px;line-height:18px"><span class="i" style="letter-spacing:-0.16px">'6s/<u>TWINKLEWRAPPER</u>=*.*/<u>TWINKLEWRAPPER</u>=<u>false</u>/' </span><span class="i" style="letter-spacing:-0.19px">/<u>etc/default/privat-userprofile</u>'</span></div>
<div style="left:114px;top:224px;width:411px;height:1px;background:#000"></div>
<div style="left:33px;top:243px;width:492px;height:1px;background:#000"></div>
<div style="left:114px;top:262px;width:411px;height:1px;background:#000"></div>
<div style="left:114px;top:224px;width:1px;height:39px;background:#000"></div>
<div style="left:196px;top:224px;width:1px;height:39px;background:#000"></div>
<div style="left:278px;top:224px;width:1px;height:39px;background:#000"></div>
<div style="left:360px;top:224px;width:1px;height:39px;background:#000"></div>
<div style="left:442px;top:224px;width:1px;height:39px;background:#000"></div>
<div style="left:524px;top:224px;width:1px;height:39px;background:#000"></div>
<div style="left:33px;top:243px;width:82px;height:20px;border:2px solid #000;border-left-width:1px"></div>
<div style="left:111.5px;top:259.5px;width:5.5px;height:5.5px;background:#000"></div>
<div style="left:33px;top:491px;width:82px;height:1px;background:#000"></div>
<div style="left:114px;top:491px;width:1px;height:20px;background:#000"></div>
<div style="left:33px;top:510px;width:773px;height:1px;background:#000"></div>
<div style="left:33px;top:658px;width:773px;height:1px;background:#000"></div>
<div style="left:805px;top:510px;width:1px;height:149px;background:#000"></div>
<svg style="left:274px;top:249px" width="5" height="8" viewBox="0 0 5 8"><path d="M0.8 0.8L4.2 4L0.8 7.2Z" fill="#ff0000" stroke="#5a0000" stroke-width="0.4"/></svg>
<svg style="left:360px;top:249px" width="5" height="8" viewBox="0 0 5 8"><path d="M4.2 0.8L0.8 4L4.2 7.2Z" fill="#ff0000" stroke="#5a0000" stroke-width="0.4"/></svg>
<svg style="left:0;top:0" width="1219" height="718" viewBox="0 0 1219 718"><path d="M66 241.65C67.6 241.65 68.4 239.35 70 239.35C71.6 239.35 72.4 241.65 74 241.65C75.6 241.65 76.4 239.35 78 239.35C79.2 239.35 79.8 241.07 81 241.07M129 241.65C130.6 241.65 131.4 239.35 133 239.35C134.6 239.35 135.4 241.65 137 241.65C138.6 241.65 139.4 239.35 141 239.35C142.6 239.35 143.4 241.65 145 241.65C146.6 241.65 147.4 239.35 149 239.35C150.6 239.35 151.4 241.65 153 241.65C154.6 241.65 155.4 239.35 157 239.35C158.6 239.35 159.4 241.65 161 241.65C162.6 241.65 163.4 239.35 165 239.35C166.6 239.35 167.4 241.65 169 241.65C170.6 241.65 171.4 239.35 173 239.35C174.6 239.35 175.4 241.65 177 241.65C178.6 241.65 179.4 239.35 181 239.35C181.4 239.35 181.6 239.93 182 239.93M307 241.65C308.6 241.65 309.4 239.35 311 239.35C312.6 239.35 313.4 241.65 315 241.65C316.6 241.65 317.4 239.35 319 239.35C320.6 239.35 321.4 241.65 323 241.65C324.6 241.65 325.4 239.35 327 239.35C328.6 239.35 329.4 241.65 331 241.65C331.4 241.65 331.6 241.07 332 241.07M445 241.65C446.6 241.65 447.4 239.35 449 239.35C450.6 239.35 451.4 241.65 453 241.65C454.6 241.65 455.4 239.35 457 239.35C458.6 239.35 459.4 241.65 461 241.65C462.6 241.65 463.4 239.35 465 239.35C466.6 239.35 467.4 241.65 469 241.65C470.6 241.65 471.4 239.35 473 239.35C474.6 239.35 475.4 241.65 477 241.65C478.6 241.65 479.4 239.35 481 239.35C482.6 239.35 483.4 241.65 485 241.65C486.2 241.65 486.8 239.93 488 239.93M365 260.65C366.6 260.65 367.4 258.35 369 258.35C370.6 258.35 371.4 260.65 373 260.65C374.6 260.65 375.4 258.35 377 258.35C378.6 258.35 379.4 260.65 381 260.65C382.6 260.65 383.4 258.35 385 258.35C386.6 258.35 387.4 260.65 389 260.65C390.6 260.65 391.4 258.35 393 258.35C394.6 258.35 395.4 260.65 397 260.65C398.6 260.65 399.4 258.35 401 258.35C402.6 258.35 403.4 260.65 405 260.65C406.6 260.65 407.4 258.35 409 258.35C410.6 258.35 411.4 260.65 413 260.65C414.6 260.65 415.4 258.35 417 258.35C418.6 258.35 419.4 260.65 421 260.65C422.6 260.65 423.4 258.35 425 258.35C426.6 258.35 427.4 260.65 429 260.65C430.6 260.65 431.4 258.35 433 258.35C434.6 258.35 435.4 260.65 437 260.65C437.8 260.65 438.2 259.5 439 259.5M44 299.65C45.6 299.65 46.4 297.35 48 297.35C49.6 297.35 50.4 299.65 52 299.65C53.6 299.65 54.4 297.35 56 297.35C57.6 297.35 58.4 299.65 60 299.65C61.6 299.65 62.4 297.35 64 297.35C65.6 297.35 66.4 299.65 68 299.65C69.6 299.65 70.4 297.35 72 297.35C73.6 297.35 74.4 299.65 76 299.65C77.6 299.65 78.4 297.35 80 297.35M35 318.65C36.6 318.65 37.4 316.35 39 316.35C40.6 316.35 41.4 318.65 43 318.65C43.4 318.65 43.6 318.07 44 318.07M103 318.65C104.6 318.65 105.4 316.35 107 316.35C108.6 316.35 109.4 318.65 111 318.65C112.6 318.65 113.4 316.35 115 316.35C116.6 316.35 117.4 318.65 119 318.65C120.6 318.65 121.4 316.35 123 316.35C123.8 316.35 124.2 317.5 125 317.5M43 337.65C44.6 337.65 45.4 335.35 47 335.35C48.6 335.35 49.4 337.65 51 337.65C52.6 337.65 53.4 335.35 55 335.35C56.2 335.35 56.8 337.07 58 337.07M66 337.65C67.6 337.65 68.4 335.35 70 335.35C71.6 335.35 72.4 337.65 74 337.65C75.6 337.65 76.4 335.35 78 335.35C79.6 335.35 80.4 337.65 82 337.65C83.6 337.65 84.4 335.35 86 335.35C87.6 335.35 88.4 337.65 90 337.65C91.6 337.65 92.4 335.35 94 335.35C95.6 335.35 96.4 337.65 98 337.65C99.6 337.65 100.4 335.35 102 335.35C102.4 335.35 102.6 335.93 103 335.93M35 356.65C36.6 356.65 37.4 354.35 39 354.35C40.6 354.35 41.4 356.65 43 356.65C43.4 356.65 43.6 356.07 44 356.07M103 356.65C104.6 356.65 105.4 354.35 107 354.35C108.6 354.35 109.4 356.65 111 356.65C112.6 356.65 113.4 354.35 115 354.35C116.6 354.35 117.4 356.65 119 356.65C120.6 356.65 121.4 354.35 123 354.35C124.6 354.35 125.4 356.65 127 356.65C128.6 356.65 129.4 354.35 131 354.35C132.6 354.35 133.4 356.65 135 356.65C136.6 356.65 137.4 354.35 139 354.35C140.6 354.35 141.4 356.65 143 356.65C143.8 356.65 144.2 355.5 145 355.5M149 356.65C150.6 356.65 151.4 354.35 153 354.35C154.6 354.35 155.4 356.65 157 356.65C158.6 356.65 159.4 354.35 161 354.35C162.6 354.35 163.4 356.65 165 356.65C166.6 356.65 167.4 354.35 169 354.35C170.6 354.35 171.4 356.65 173 356.65C174.6 356.65 175.4 354.35 177 354.35C178.6 354.35 179.4 356.65 181 356.65C182.6 356.65 183.4 354.35 185 354.35C186.6 354.35 187.4 356.65 189 356.65C190.6 356.65 191.4 354.35 193 354.35C194.2 354.35 194.8 356.07 196 356.07M200 356.65C201.6 356.65 202.4 354.35 204 354.35C205.6 354.35 206.4 356.65 208 356.65C209.6 356.65 210.4 354.35 212 354.35C213.6 354.35 214.4 356.65 216 356.65C217.6 356.65 218.4 354.35 220 354.35C221.6 354.35 222.4 356.65 224 356.65C225.6 356.65 226.4 354.35 228 354.35C229.6 354.35 230.4 356.65 232 356.65C233.6 356.65 234.4 354.35 236 354.35C237.6 354.35 238.4 356.65 240 356.65C241.6 356.65 242.4 354.35 244 354.35C245.6 354.35 246.4 356.65 248 356.65C249.6 356.65 250.4 354.35 252 354.35C252.4 354.35 252.6 354.93 253 354.93M257 356.65C258.6 356.65 259.4 354.35 261 354.35C262.6 354.35 263.4 356.65 265 356.65C266.6 356.65 267.4 354.35 269 354.35C270.6 354.35 271.4 356.65 273 356.65C274.6 356.65 275.4 354.35 277 354.35C278.6 354.35 279.4 356.65 281 356.65C282.6 356.65 283.4 354.35 285 354.35C286.6 354.35 287.4 356.65 289 356.65C290.6 356.65 291.4 354.35 293 354.35C294.6 354.35 295.4 356.65 297 356.65C298.6 356.65 299.4 354.35 301 354.35C302.6 354.35 303.4 356.65 305 356.65C306.6 356.65 307.4 354.35 309 354.35C310.6 354.35 311.4 356.65 313 356.65C314.6 356.65 315.4 354.35 317 354.35C318.6 354.35 319.4 356.65 321 356.65C322.6 356.65 323.4 354.35 325 354.35C326.6 354.35 327.4 356.65 329 356.65C330.6 356.65 331.4 354.35 333 354.35C334.6 354.35 335.4 356.65 337 356.65C338.6 356.65 339.4 354.35 341 354.35C342.6 354.35 343.4 356.65 345 356.65C346.6 356.65 347.4 354.35 349 354.35C350.6 354.35 351.4 356.65 353 356.65C354.6 356.65 355.4 354.35 357 354.35C358.6 354.35 359.4 356.65 361 356.65C362.6 356.65 363.4 354.35 365 354.35C366.6 354.35 367.4 356.65 369 356.65C370.6 356.65 371.4 354.35 373 354.35C374.6 354.35 375.4 356.65 377 356.65C378.2 356.65 378.8 354.93 380 354.93M393 356.65C394.6 356.65 395.4 354.35 397 354.35C398.6 354.35 399.4 356.65 401 356.65C402.6 356.65 403.4 354.35 405 354.35C406.6 354.35 407.4 356.65 409 356.65C410.6 356.65 411.4 354.35 413 354.35C414.6 354.35 415.4 356.65 417 356.65C418.6 356.65 419.4 354.35 421 354.35C422.6 354.35 423.4 356.65 425 356.65C426.6 356.65 427.4 354.35 429 354.35C430.6 354.35 431.4 356.65 433 356.65C434.6 356.65 435.4 354.35 437 354.35M469 356.65C470.6 356.65 471.4 354.35 473 354.35C474.6 354.35 475.4 356.65 477 356.65C478.6 356.65 479.4 354.35 481 354.35C482.6 354.35 483.4 356.65 485 356.65C486.6 356.65 487.4 354.35 489 354.35C490.6 354.35 491.4 356.65 493 356.65C494.6 356.65 495.4 354.35 497 354.35C498.6 354.35 499.4 356.65 501 356.65C502.6 356.65 503.4 354.35 505 354.35C506.6 354.35 507.4 356.65 509 356.65C510.6 356.65 511.4 354.35 513 354.35C514.6 354.35 515.4 356.65 517 356.65C518.6 356.65 519.4 354.35 521 354.35C522.6 354.35 523.4 356.65 525 356.65C526.6 356.65 527.4 354.35 529 354.35C530.6 354.35 531.4 356.65 533 356.65C534.6 356.65 535.4 354.35 537 354.35C538.6 354.35 539.4 356.65 541 356.65C542.6 356.65 543.4 354.35 545 354.35C546.6 354.35 547.4 356.65 549 356.65C550.6 356.65 551.4 354.35 553 354.35C554.6 354.35 555.4 356.65 557 356.65C558.6 356.65 559.4 354.35 561 354.35C562.6 354.35 563.4 356.65 565 356.65C566.6 356.65 567.4 354.35 569 354.35C570.6 354.35 571.4 356.65 573 356.65C574.6 356.65 575.4 354.35 577 354.35C578.6 354.35 579.4 356.65 581 356.65C582.6 356.65 583.4 354.35 585 354.35C586.6 354.35 587.4 356.65 589 356.65C590.2 356.65 590.8 354.93 592 354.93M604 356.65C605.6 356.65 606.4 354.35 608 354.35C609.6 354.35 610.4 356.65 612 356.65C613.6 356.65 614.4 354.35 616 354.35C617.6 354.35 618.4 356.65 620 356.65C621.6 356.65 622.4 354.35 624 354.35C625.6 354.35 626.4 356.65 628 356.65C629.6 356.65 630.4 354.35 632 354.35C633.6 354.35 634.4 356.65 636 356.65C637.6 356.65 638.4 354.35 640 354.35C641.6 354.35 642.4 356.65 644 356.65C644.8 356.65 645.2 355.5 646 355.5M650 356.65C651.6 356.65 652.4 354.35 654 354.35C655.6 354.35 656.4 356.65 658 356.65C659.6 356.65 660.4 354.35 662 354.35C663.6 354.35 664.4 356.65 666 356.65C667.6 356.65 668.4 354.35 670 354.35C671.6 354.35 672.4 356.65 674 356.65C675.6 356.65 676.4 354.35 678 354.35C679.6 354.35 680.4 356.65 682 356.65C683.6 356.65 684.4 354.35 686 354.35C687.6 354.35 688.4 356.65 690 356.65C691.6 356.65 692.4 354.35 694 354.35C695.2 354.35 695.8 356.07 697 356.07M701 356.65C702.6 356.65 703.4 354.35 705 354.35C706.6 354.35 707.4 356.65 709 356.65C710.6 356.65 711.4 354.35 713 354.35C714.6 354.35 715.4 356.65 717 356.65C718.6 356.65 719.4 354.35 721 354.35C722.6 354.35 723.4 356.65 725 356.65C726.6 356.65 727.4 354.35 729 354.35C730.6 354.35 731.4 356.65 733 356.65C734.6 356.65 735.4 354.35 737 354.35C738.6 354.35 739.4 356.65 741 356.65C742.6 356.65 743.4 354.35 745 354.35C746.6 354.35 747.4 356.65 749 356.65C750.6 356.65 751.4 354.35 753 354.35C753.4 354.35 753.6 354.93 754 354.93M758 356.65C759.6 356.65 760.4 354.35 762 354.35C763.6 354.35 764.4 356.65 766 356.65C767.6 356.65 768.4 354.35 770 354.35C771.6 354.35 772.4 356.65 774 356.65C775.6 356.65 776.4 354.35 778 354.35C779.6 354.35 780.4 356.65 782 356.65C783.6 356.65 784.4 354.35 786 354.35C787.6 354.35 788.4 356.65 790 356.65C791.6 356.65 792.4 354.35 794 354.35C795.6 354.35 796.4 356.65 798 356.65C799.6 356.65 800.4 354.35 802 354.35C803.6 354.35 804.4 356.65 806 356.65C807.6 356.65 808.4 354.35 810 354.35C811.6 354.35 812.4 356.65 814 356.65C815.6 356.65 816.4 354.35 818 354.35C819.6 354.35 820.4 356.65 822 356.65C823.6 356.65 824.4 354.35 826 354.35C827.6 354.35 828.4 356.65 830 356.65C830.8 356.65 831.2 355.5 832 355.5M844 356.65C845.6 356.65 846.4 354.35 848 354.35C849.6 354.35 850.4 356.65 852 356.65C853.6 356.65 854.4 354.35 856 354.35C857.6 354.35 858.4 356.65 860 356.65C861.6 356.65 862.4 354.35 864 354.35C865.6 354.35 866.4 356.65 868 356.65C869.6 356.65 870.4 354.35 872 354.35C873.6 354.35 874.4 356.65 876 356.65C877.6 356.65 878.4 354.35 880 354.35C881.6 354.35 882.4 356.65 884 356.65C885.6 356.65 886.4 354.35 888 354.35M920 356.65C921.6 356.65 922.4 354.35 924 354.35C925.6 354.35 926.4 356.65 928 356.65C929.6 356.65 930.4 354.35 932 354.35C933.6 354.35 934.4 356.65 936 356.65C937.6 356.65 938.4 354.35 940 354.35C941.6 354.35 942.4 356.65 944 356.65C945.6 356.65 946.4 354.35 948 354.35C949.6 354.35 950.4 356.65 952 356.65C953.6 356.65 954.4 354.35 956 354.35C957.6 354.35 958.4 356.65 960 356.65C961.6 356.65 962.4 354.35 964 354.35C965.6 354.35 966.4 356.65 968 356.65C969.6 356.65 970.4 354.35 972 354.35C973.6 354.35 974.4 356.65 976 356.65C977.6 356.65 978.4 354.35 980 354.35C981.6 354.35 982.4 356.65 984 356.65C985.6 356.65 986.4 354.35 988 354.35C989.6 354.35 990.4 356.65 992 356.65C992.8 356.65 993.2 355.5 994 355.5M35 375.65C36.6 375.65 37.4 373.35 39 373.35C40.6 373.35 41.4 375.65 43 375.65C44.6 375.65 45.4 373.35 47 373.35C48.6 373.35 49.4 375.65 51 375.65C52.6 375.65 53.4 373.35 55 373.35C56.2 373.35 56.8 375.07 58 375.07M67 375.65C68.6 375.65 69.4 373.35 71 373.35M98 375.65C99.6 375.65 100.4 373.35 102 373.35C103.6 373.35 104.4 375.65 106 375.65C107.6 375.65 108.4 373.35 110 373.35C111.6 373.35 112.4 375.65 114 375.65C115.6 375.65 116.4 373.35 118 373.35C119.6 373.35 120.4 375.65 122 375.65C123.6 375.65 124.4 373.35 126 373.35C127.6 373.35 128.4 375.65 130 375.65C131.6 375.65 132.4 373.35 134 373.35C135.6 373.35 136.4 375.65 138 375.65C139.6 375.65 140.4 373.35 142 373.35C143.6 373.35 144.4 375.65 146 375.65C147.6 375.65 148.4 373.35 150 373.35C151.6 373.35 152.4 375.65 154 375.65C155.6 375.65 156.4 373.35 158 373.35C159.6 373.35 160.4 375.65 162 375.65C163.6 375.65 164.4 373.35 166 373.35C167.6 373.35 168.4 375.65 170 375.65M202 375.65C203.6 375.65 204.4 373.35 206 373.35C207.6 373.35 208.4 375.65 210 375.65C211.6 375.65 212.4 373.35 214 373.35C215.6 373.35 216.4 375.65 218 375.65C219.6 375.65 220.4 373.35 222 373.35C223.6 373.35 224.4 375.65 226 375.65C227.6 375.65 228.4 373.35 230 373.35C230.4 373.35 230.6 373.93 231 373.93M256 375.65C257.6 375.65 258.4 373.35 260 373.35C261.6 373.35 262.4 375.65 264 375.65C265.6 375.65 266.4 373.35 268 373.35C269.6 373.35 270.4 375.65 272 375.65C273.6 375.65 274.4 373.35 276 373.35C277.6 373.35 278.4 375.65 280 375.65C281.6 375.65 282.4 373.35 284 373.35C285.6 373.35 286.4 375.65 288 375.65C289.6 375.65 290.4 373.35 292 373.35C293.6 373.35 294.4 375.65 296 375.65C297.6 375.65 298.4 373.35 300 373.35C301.6 373.35 302.4 375.65 304 375.65C305.6 375.65 306.4 373.35 308 373.35C309.6 373.35 310.4 375.65 312 375.65C313.6 375.65 314.4 373.35 316 373.35C317.6 373.35 318.4 375.65 320 375.65C321.6 375.65 322.4 373.35 324 373.35C325.6 373.35 326.4 375.65 328 375.65M35 394.65C36.6 394.65 37.4 392.35 39 392.35C40.6 392.35 41.4 394.65 43 394.65C44.6 394.65 45.4 392.35 47 392.35C48.6 392.35 49.4 394.65 51 394.65C52.6 394.65 53.4 392.35 55 392.35C56.2 392.35 56.8 394.07 58 394.07M67 394.65C68.6 394.65 69.4 392.35 71 392.35M98 394.65C99.6 394.65 100.4 392.35 102 392.35C103.6 392.35 104.4 394.65 106 394.65C107.6 394.65 108.4 392.35 110 392.35C111.6 392.35 112.4 394.65 114 394.65C115.6 394.65 116.4 392.35 118 392.35C119.6 392.35 120.4 394.65 122 394.65C123.6 394.65 124.4 392.35 126 392.35C127.6 392.35 128.4 394.65 130 394.65C131.6 394.65 132.4 392.35 134 392.35C135.6 392.35 136.4 394.65 138 394.65C139.6 394.65 140.4 392.35 142 392.35C143.6 392.35 144.4 394.65 146 394.65C147.6 394.65 148.4 392.35 150 392.35C151.6 392.35 152.4 394.65 154 394.65C155.6 394.65 156.4 392.35 158 392.35C159.6 392.35 160.4 394.65 162 394.65C163.6 394.65 164.4 392.35 166 392.35C167.6 392.35 168.4 394.65 170 394.65C170.4 394.65 170.6 394.07 171 394.07M203 394.65C204.6 394.65 205.4 392.35 207 392.35C208.6 392.35 209.4 394.65 211 394.65C212.6 394.65 213.4 392.35 215 392.35C216.6 392.35 217.4 394.65 219 394.65C220.6 394.65 221.4 392.35 223 392.35C224.6 392.35 225.4 394.65 227 394.65C228.6 394.65 229.4 392.35 231 392.35C231.4 392.35 231.6 392.93 232 392.93M257 394.65C258.6 394.65 259.4 392.35 261 392.35C262.6 392.35 263.4 394.65 265 394.65C266.6 394.65 267.4 392.35 269 392.35C270.6 392.35 271.4 394.65 273 394.65C274.6 394.65 275.4 392.35 277 392.35C278.6 392.35 279.4 394.65 281 394.65C282.6 394.65 283.4 392.35 285 392.35C286.6 392.35 287.4 394.65 289 394.65C290.6 394.65 291.4 392.35 293 392.35C294.6 392.35 295.4 394.65 297 394.65C298.6 394.65 299.4 392.35 301 392.35C302.6 392.35 303.4 394.65 305 394.65C306.6 394.65 307.4 392.35 309 392.35C310.6 392.35 311.4 394.65 313 394.65C314.6 394.65 315.4 392.35 317 392.35C318.6 392.35 319.4 394.65 321 394.65C322.6 394.65 323.4 392.35 325 392.35C326.6 392.35 327.4 394.65 329 394.65C329.4 394.65 329.6 394.07 330 394.07M35 413.65C36.6 413.65 37.4 411.35 39 411.35C40.6 411.35 41.4 413.65 43 413.65C44.6 413.65 45.4 411.35 47 411.35C48.6 411.35 49.4 413.65 51 413.65C52.6 413.65 53.4 411.35 55 411.35C56.2 411.35 56.8 413.07 58 413.07M67 413.65C68.6 413.65 69.4 411.35 71 411.35M98 413.65C99.6 413.65 100.4 411.35 102 411.35C103.6 411.35 104.4 413.65 106 413.65C107.6 413.65 108.4 411.35 110 411.35C111.6 411.35 112.4 413.65 114 413.65C115.6 413.65 116.4 411.35 118 411.35C119.6 411.35 120.4 413.65 122 413.65C123.6 413.65 124.4 411.35 126 411.35C127.6 411.35 128.4 413.65 130 413.65C131.6 413.65 132.4 411.35 134 411.35C135.6 411.35 136.4 413.65 138 413.65C139.6 413.65 140.4 411.35 142 411.35C143.6 411.35 144.4 413.65 146 413.65C147.6 413.65 148.4 411.35 150 411.35C151.6 411.35 152.4 413.65 154 413.65C155.6 413.65 156.4 411.35 158 411.35C159.6 411.35 160.4 413.65 162 413.65C162.8 413.65 163.2 412.5 164 412.5M197 413.65C198.6 413.65 199.4 411.35 201 411.35C202.6 411.35 203.4 413.65 205 413.65C206.6 413.65 207.4 411.35 209 411.35C210.6 411.35 211.4 413.65 213 413.65C214.6 413.65 215.4 411.35 217 411.35C218.6 411.35 219.4 413.65 221 413.65C222.6 413.65 223.4 411.35 225 411.35C226.6 411.35 227.4 413.65 229 413.65C230.6 413.65 231.4 411.35 233 411.35C234.6 411.35 235.4 413.65 237 413.65C238.6 413.65 239.4 411.35 241 411.35C242.6 411.35 243.4 413.65 245 413.65C246.6 413.65 247.4 411.35 249 411.35C250.6 411.35 251.4 413.65 253 413.65C254.6 413.65 255.4 411.35 257 411.35C258.6 411.35 259.4 413.65 261 413.65C261.8 413.65 262.2 412.5 263 412.5M51 432.65C52.6 432.65 53.4 430.35 55 430.35C56.6 430.35 57.4 432.65 59 432.65C60.6 432.65 61.4 430.35 63 430.35C64.6 430.35 65.4 432.65 67 432.65C68.6 432.65 69.4 430.35 71 430.35C72.6 430.35 73.4 432.65 75 432.65C76.6 432.65 77.4 430.35 79 430.35C80.6 430.35 81.4 432.65 83 432.65C84.6 432.65 85.4 430.35 87 430.35C88.6 430.35 89.4 432.65 91 432.65C92.6 432.65 93.4 430.35 95 430.35C96.6 430.35 97.4 432.65 99 432.65C100.6 432.65 101.4 430.35 103 430.35C104.6 430.35 105.4 432.65 107 432.65C108.6 432.65 109.4 430.35 111 430.35C112.6 430.35 113.4 432.65 115 432.65C116.6 432.65 117.4 430.35 119 430.35C120.6 430.35 121.4 432.65 123 432.65C124.6 432.65 125.4 430.35 127 430.35C128.6 430.35 129.4 432.65 131 432.65C132.6 432.65 133.4 430.35 135 430.35C136.6 430.35 137.4 432.65 139 432.65C140.6 432.65 141.4 430.35 143 430.35C144.6 430.35 145.4 432.65 147 432.65C148.6 432.65 149.4 430.35 151 430.35C152.6 430.35 153.4 432.65 155 432.65C156.6 432.65 157.4 430.35 159 430.35C160.6 430.35 161.4 432.65 163 432.65C164.6 432.65 165.4 430.35 167 430.35C168.6 430.35 169.4 432.65 171 432.65C172.6 432.65 173.4 430.35 175 430.35C176.6 430.35 177.4 432.65 179 432.65C180.6 432.65 181.4 430.35 183 430.35C184.6 430.35 185.4 432.65 187 432.65C188.6 432.65 189.4 430.35 191 430.35C192.6 430.35 193.4 432.65 195 432.65C196.6 432.65 197.4 430.35 199 430.35C200.6 430.35 201.4 432.65 203 432.65C204.6 432.65 205.4 430.35 207 430.35C208.6 430.35 209.4 432.65 211 432.65C212.6 432.65 213.4 430.35 215 430.35C216.6 430.35 217.4 432.65 219 432.65C220.6 432.65 221.4 430.35 223 430.35C224.6 430.35 225.4 432.65 227 432.65C228.6 432.65 229.4 430.35 231 430.35C232.6 430.35 233.4 432.65 235 432.65C236.6 432.65 237.4 430.35 239 430.35C240.6 430.35 241.4 432.65 243 432.65C244.6 432.65 245.4 430.35 247 430.35C248.6 430.35 249.4 432.65 251 432.65C252.6 432.65 253.4 430.35 255 430.35C256.6 430.35 257.4 432.65 259 432.65C260.6 432.65 261.4 430.35 263 430.35C264.6 430.35 265.4 432.65 267 432.65C268.6 432.65 269.4 430.35 271 430.35C272.6 430.35 273.4 432.65 275 432.65C276.6 432.65 277.4 430.35 279 430.35C280.6 430.35 281.4 432.65 283 432.65C284.6 432.65 285.4 430.35 287 430.35C288.6 430.35 289.4 432.65 291 432.65C292.6 432.65 293.4 430.35 295 430.35C296.6 430.35 297.4 432.65 299 432.65C300.6 432.65 301.4 430.35 303 430.35C304.6 430.35 305.4 432.65 307 432.65C308.6 432.65 309.4 430.35 311 430.35C312.6 430.35 313.4 432.65 315 432.65C316.6 432.65 317.4 430.35 319 430.35C320.6 430.35 321.4 432.65 323 432.65C324.2 432.65 324.8 430.93 326 430.93M47 451.65C48.6 451.65 49.4 449.35 51 449.35C52.6 449.35 53.4 451.65 55 451.65C56.6 451.65 57.4 449.35 59 449.35C60.6 449.35 61.4 451.65 63 451.65C64.6 451.65 65.4 449.35 67 449.35C68.2 449.35 68.8 451.07 70 451.07M79 451.65C80.6 451.65 81.4 449.35 83 449.35M110 451.65C111.6 451.65 112.4 449.35 114 449.35C115.6 449.35 116.4 451.65 118 451.65C119.6 451.65 120.4 449.35 122 449.35C123.6 449.35 124.4 451.65 126 451.65C127.6 451.65 128.4 449.35 130 449.35C131.6 449.35 132.4 451.65 134 451.65C135.6 451.65 136.4 449.35 138 449.35C139.6 449.35 140.4 451.65 142 451.65C143.6 451.65 144.4 449.35 146 449.35C147.6 449.35 148.4 451.65 150 451.65C151.6 451.65 152.4 449.35 154 449.35C155.6 449.35 156.4 451.65 158 451.65C159.6 451.65 160.4 449.35 162 449.35C163.6 449.35 164.4 451.65 166 451.65C167.6 451.65 168.4 449.35 170 449.35C171.6 449.35 172.4 451.65 174 451.65C175.6 451.65 176.4 449.35 178 449.35C179.6 449.35 180.4 451.65 182 451.65C183.6 451.65 184.4 449.35 186 449.35C187.6 449.35 188.4 451.65 190 451.65C191.6 451.65 192.4 449.35 194 449.35C195.6 449.35 196.4 451.65 198 451.65C199.6 451.65 200.4 449.35 202 449.35C203.6 449.35 204.4 451.65 206 451.65C207.6 451.65 208.4 449.35 210 449.35C211.6 449.35 212.4 451.65 214 451.65C215.6 451.65 216.4 449.35 218 449.35C219.6 449.35 220.4 451.65 222 451.65C223.6 451.65 224.4 449.35 226 449.35C227.6 449.35 228.4 451.65 230 451.65C231.2 451.65 231.8 449.93 233 449.93M266 451.65C267.6 451.65 268.4 449.35 270 449.35C271.6 449.35 272.4 451.65 274 451.65C275.6 451.65 276.4 449.35 278 449.35C279.6 449.35 280.4 451.65 282 451.65C283.6 451.65 284.4 449.35 286 449.35C287.6 449.35 288.4 451.65 290 451.65C291.6 451.65 292.4 449.35 294 449.35C295.6 449.35 296.4 451.65 298 451.65C299.6 451.65 300.4 449.35 302 449.35C303.6 449.35 304.4 451.65 306 451.65C307.6 451.65 308.4 449.35 310 449.35C311.6 449.35 312.4 451.65 314 451.65C315.6 451.65 316.4 449.35 318 449.35C319.6 449.35 320.4 451.65 322 451.65C323.6 451.65 324.4 449.35 326 449.35C327.6 449.35 328.4 451.65 330 451.65C331.6 451.65 332.4 449.35 334 449.35C335.6 449.35 336.4 451.65 338 451.65C339.6 451.65 340.4 449.35 342 449.35C343.6 449.35 344.4 451.65 346 451.65C347.6 451.65 348.4 449.35 350 449.35C351.6 449.35 352.4 451.65 354 451.65C355.6 451.65 356.4 449.35 358 449.35C359.6 449.35 360.4 451.65 362 451.65C363.6 451.65 364.4 449.35 366 449.35C367.6 449.35 368.4 451.65 370 451.65C371.6 451.65 372.4 449.35 374 449.35C375.6 449.35 376.4 451.65 378 451.65C379.6 451.65 380.4 449.35 382 449.35C383.6 449.35 384.4 451.65 386 451.65C387.2 451.65 387.8 449.93 389 449.93M400 451.65C401.6 451.65 402.4 449.35 404 449.35C405.6 449.35 406.4 451.65 408 451.65C409.6 451.65 410.4 449.35 412 449.35C413.6 449.35 414.4 451.65 416 451.65C417.6 451.65 418.4 449.35 420 449.35C421.6 449.35 422.4 451.65 424 451.65C425.6 451.65 426.4 449.35 428 449.35C429.2 449.35 429.8 451.07 431 451.07M447 451.65C448.6 451.65 449.4 449.35 451 449.35C452.6 449.35 453.4 451.65 455 451.65C456.6 451.65 457.4 449.35 459 449.35C460.6 449.35 461.4 451.65 463 451.65C464.6 451.65 465.4 449.35 467 449.35C468.6 449.35 469.4 451.65 471 451.65C472.6 451.65 473.4 449.35 475 449.35C476.6 449.35 477.4 451.65 479 451.65C480.6 451.65 481.4 449.35 483 449.35C483.4 449.35 483.6 449.93 484 449.93M35 470.65C36.6 470.65 37.4 468.35 39 468.35C40.6 468.35 41.4 470.65 43 470.65M47 489.65C48.6 489.65 49.4 487.35 51 487.35C52.6 487.35 53.4 489.65 55 489.65C56.6 489.65 57.4 487.35 59 487.35C60.6 487.35 61.4 489.65 63 489.65C64.6 489.65 65.4 487.35 67 487.35C68.2 487.35 68.8 489.07 70 489.07M79 489.65C80.6 489.65 81.4 487.35 83 487.35M110 489.65C111.6 489.65 112.4 487.35 114 487.35C115.6 487.35 116.4 489.65 118 489.65C119.6 489.65 120.4 487.35 122 487.35C123.6 487.35 124.4 489.65 126 489.65C127.6 489.65 128.4 487.35 130 487.35C131.6 487.35 132.4 489.65 134 489.65C135.6 489.65 136.4 487.35 138 487.35C139.6 487.35 140.4 489.65 142 489.65C143.6 489.65 144.4 487.35 146 487.35C147.6 487.35 148.4 489.65 150 489.65C151.6 489.65 152.4 487.35 154 487.35C155.6 487.35 156.4 489.65 158 489.65C159.6 489.65 160.4 487.35 162 487.35C163.6 487.35 164.4 489.65 166 489.65C167.6 489.65 168.4 487.35 170 487.35C171.6 487.35 172.4 489.65 174 489.65C175.6 489.65 176.4 487.35 178 487.35C179.6 487.35 180.4 489.65 182 489.65C183.6 489.65 184.4 487.35 186 487.35C187.6 487.35 188.4 489.65 190 489.65C191.6 489.65 192.4 487.35 194 487.35C195.6 487.35 196.4 489.65 198 489.65C199.6 489.65 200.4 487.35 202 487.35C203.6 487.35 204.4 489.65 206 489.65C207.6 489.65 208.4 487.35 210 487.35C211.6 487.35 212.4 489.65 214 489.65C215.6 489.65 216.4 487.35 218 487.35C219.6 487.35 220.4 489.65 222 489.65C223.6 489.65 224.4 487.35 226 487.35C227.6 487.35 228.4 489.65 230 489.65C230.8 489.65 231.2 488.5 232 488.5M265 489.65C266.6 489.65 267.4 487.35 269 487.35C270.6 487.35 271.4 489.65 273 489.65C274.6 489.65 275.4 487.35 277 487.35C278.6 487.35 279.4 489.65 281 489.65C282.6 489.65 283.4 487.35 285 487.35C286.6 487.35 287.4 489.65 289 489.65C290.6 489.65 291.4 487.35 293 487.35C294.6 487.35 295.4 489.65 297 489.65C298.6 489.65 299.4 487.35 301 487.35C302.6 487.35 303.4 489.65 305 489.65C306.6 489.65 307.4 487.35 309 487.35C310.6 487.35 311.4 489.65 313 489.65C314.6 489.65 315.4 487.35 317 487.35C318.6 487.35 319.4 489.65 321 489.65C322.6 489.65 323.4 487.35 325 487.35C326.6 487.35 327.4 489.65 329 489.65C330.6 489.65 331.4 487.35 333 487.35C334.6 487.35 335.4 489.65 337 489.65C338.6 489.65 339.4 487.35 341 487.35C342.6 487.35 343.4 489.65 345 489.65C346.6 489.65 347.4 487.35 349 487.35C350.6 487.35 351.4 489.65 353 489.65C354.6 489.65 355.4 487.35 357 487.35C358.6 487.35 359.4 489.65 361 489.65C362.6 489.65 363.4 487.35 365 487.35C366.6 487.35 367.4 489.65 369 489.65C370.6 489.65 371.4 487.35 373 487.35C374.6 487.35 375.4 489.65 377 489.65C378.6 489.65 379.4 487.35 381 487.35C382.6 487.35 383.4 489.65 385 489.65C385.8 489.65 386.2 488.5 387 488.5M398 489.65C399.6 489.65 400.4 487.35 402 487.35C403.6 487.35 404.4 489.65 406 489.65C407.6 489.65 408.4 487.35 410 487.35C411.6 487.35 412.4 489.65 414 489.65C415.6 489.65 416.4 487.35 418 487.35C419.6 487.35 420.4 489.65 422 489.65C423.6 489.65 424.4 487.35 426 487.35C427.2 487.35 427.8 489.07 429 489.07M446 489.65C447.6 489.65 448.4 487.35 450 487.35C451.6 487.35 452.4 489.65 454 489.65C455.6 489.65 456.4 487.35 458 487.35C459.6 487.35 460.4 489.65 462 489.65C463.6 489.65 464.4 487.35 466 487.35C467.6 487.35 468.4 489.65 470 489.65C471.6 489.65 472.4 487.35 474 487.35C475.6 487.35 476.4 489.65 478 489.65C479.6 489.65 480.4 487.35 482 487.35C483.6 487.35 484.4 489.65 486 489.65C487.6 489.65 488.4 487.35 490 487.35C491.6 487.35 492.4 489.65 494 489.65C495.6 489.65 496.4 487.35 498 487.35C499.6 487.35 500.4 489.65 502 489.65C503.6 489.65 504.4 487.35 506 487.35C507.6 487.35 508.4 489.65 510 489.65C511.6 489.65 512.4 487.35 514 487.35C515.6 487.35 516.4 489.65 518 489.65C519.6 489.65 520.4 487.35 522 487.35C523.6 487.35 524.4 489.65 526 489.65C527.6 489.65 528.4 487.35 530 487.35C531.6 487.35 532.4 489.65 534 489.65C535.6 489.65 536.4 487.35 538 487.35C539.6 487.35 540.4 489.65 542 489.65C543.6 489.65 544.4 487.35 546 487.35C547.6 487.35 548.4 489.65 550 489.65C551.6 489.65 552.4 487.35 554 487.35C555.6 487.35 556.4 489.65 558 489.65C559.6 489.65 560.4 487.35 562 487.35C563.6 487.35 564.4 489.65 566 489.65C567.6 489.65 568.4 487.35 570 487.35C571.6 487.35 572.4 489.65 574 489.65C575.6 489.65 576.4 487.35 578 487.35C579.6 487.35 580.4 489.65 582 489.65C583.6 489.65 584.4 487.35 586 487.35C587.6 487.35 588.4 489.65 590 489.65C591.6 489.65 592.4 487.35 594 487.35C595.6 487.35 596.4 489.65 598 489.65C599.6 489.65 600.4 487.35 602 487.35C603.6 487.35 604.4 489.65 606 489.65C607.6 489.65 608.4 487.35 610 487.35C611.6 487.35 612.4 489.65 614 489.65C615.6 489.65 616.4 487.35 618 487.35C619.6 487.35 620.4 489.65 622 489.65C623.6 489.65 624.4 487.35 626 487.35C627.6 487.35 628.4 489.65 630 489.65C630.8 489.65 631.2 488.5 632 488.5M35 508.65C36.6 508.65 37.4 506.35 39 506.35C40.6 506.35 41.4 508.65 43 508.65C44.6 508.65 45.4 506.35 47 506.35C48.6 506.35 49.4 508.65 51 508.65C52.6 508.65 53.4 506.35 55 506.35C56.6 506.35 57.4 508.65 59 508.65C60.6 508.65 61.4 506.35 63 506.35C64.6 506.35 65.4 508.65 67 508.65C68.6 508.65 69.4 506.35 71 506.35C72.6 506.35 73.4 508.65 75 508.65C75.8 508.65 76.2 507.5 77 507.5M35 533.65C36.6 533.65 37.4 531.35 39 531.35C40.6 531.35 41.4 533.65 43 533.65C44.6 533.65 45.4 531.35 47 531.35C48.6 531.35 49.4 533.65 51 533.65C52.6 533.65 53.4 531.35 55 531.35C56.2 531.35 56.8 533.08 58 533.08M67 533.65C68.6 533.65 69.4 531.35 71 531.35M98 533.65C99.6 533.65 100.4 531.35 102 531.35C103.6 531.35 104.4 533.65 106 533.65C107.6 533.65 108.4 531.35 110 531.35C111.6 531.35 112.4 533.65 114 533.65C115.6 533.65 116.4 531.35 118 531.35C119.6 531.35 120.4 533.65 122 533.65C123.6 533.65 124.4 531.35 126 531.35C127.6 531.35 128.4 533.65 130 533.65C131.6 533.65 132.4 531.35 134 531.35C135.6 531.35 136.4 533.65 138 533.65C139.6 533.65 140.4 531.35 142 531.35C143.6 531.35 144.4 533.65 146 533.65C147.6 533.65 148.4 531.35 150 531.35C151.6 531.35 152.4 533.65 154 533.65C155.6 533.65 156.4 531.35 158 531.35C159.6 531.35 160.4 533.65 162 533.65C163.6 533.65 164.4 531.35 166 531.35C167.6 531.35 168.4 533.65 170 533.65M201 533.65C202.6 533.65 203.4 531.35 205 531.35C206.6 531.35 207.4 533.65 209 533.65C210.6 533.65 211.4 531.35 213 531.35C214.6 531.35 215.4 533.65 217 533.65C218.6 533.65 219.4 531.35 221 531.35C222.6 531.35 223.4 533.65 225 533.65C226.6 533.65 227.4 531.35 229 531.35C229.4 531.35 229.6 531.92 230 531.92M255 533.65C256.6 533.65 257.4 531.35 259 531.35C260.6 531.35 261.4 533.65 263 533.65C264.6 533.65 265.4 531.35 267 531.35C268.6 531.35 269.4 533.65 271 533.65C272.6 533.65 273.4 531.35 275 531.35C276.6 531.35 277.4 533.65 279 533.65C280.6 533.65 281.4 531.35 283 531.35C284.6 531.35 285.4 533.65 287 533.65C288.6 533.65 289.4 531.35 291 531.35C292.6 531.35 293.4 533.65 295 533.65C296.6 533.65 297.4 531.35 299 531.35C300.6 531.35 301.4 533.65 303 533.65C304.6 533.65 305.4 531.35 307 531.35C308.6 531.35 309.4 533.65 311 533.65C312.6 533.65 313.4 531.35 315 531.35C316.6 531.35 317.4 533.65 319 533.65C320.6 533.65 321.4 531.35 323 531.35C324.6 531.35 325.4 533.65 327 533.65M395 533.65C396.6 533.65 397.4 531.35 399 531.35C400.6 531.35 401.4 533.65 403 533.65C404.6 533.65 405.4 531.35 407 531.35C408.6 531.35 409.4 533.65 411 533.65C412.6 533.65 413.4 531.35 415 531.35C416.6 531.35 417.4 533.65 419 533.65C420.6 533.65 421.4 531.35 423 531.35C424.6 531.35 425.4 533.65 427 533.65C428.6 533.65 429.4 531.35 431 531.35C432.6 531.35 433.4 533.65 435 533.65C436.6 533.65 437.4 531.35 439 531.35C440.6 531.35 441.4 533.65 443 533.65C444.6 533.65 445.4 531.35 447 531.35C448.6 531.35 449.4 533.65 451 533.65C452.6 533.65 453.4 531.35 455 531.35C456.6 531.35 457.4 533.65 459 533.65C460.6 533.65 461.4 531.35 463 531.35C464.6 531.35 465.4 533.65 467 533.65C468.6 533.65 469.4 531.35 471 531.35C472.6 531.35 473.4 533.65 475 533.65C476.6 533.65 477.4 531.35 479 531.35C480.6 531.35 481.4 533.65 483 533.65C484.6 533.65 485.4 531.35 487 531.35C488.6 531.35 489.4 533.65 491 533.65C492.6 533.65 493.4 531.35 495 531.35C496.6 531.35 497.4 533.65 499 533.65C500.6 533.65 501.4 531.35 503 531.35C504.6 531.35 505.4 533.65 507 533.65C508.6 533.65 509.4 531.35 511 531.35C512.6 531.35 513.4 533.65 515 533.65C516.6 533.65 517.4 531.35 519 531.35C520.6 531.35 521.4 533.65 523 533.65C524.6 533.65 525.4 531.35 527 531.35C528.6 531.35 529.4 533.65 531 533.65C532.6 533.65 533.4 531.35 535 531.35C536.6 531.35 537.4 533.65 539 533.65C540.6 533.65 541.4 531.35 543 531.35C544.6 531.35 545.4 533.65 547 533.65C548.6 533.65 549.4 531.35 551 531.35C552.6 531.35 553.4 533.65 555 533.65C556.6 533.65 557.4 531.35 559 531.35C560.6 531.35 561.4 533.65 563 533.65C564.6 533.65 565.4 531.35 567 531.35C568.6 531.35 569.4 533.65 571 533.65C572.6 533.65 573.4 531.35 575 531.35C576.6 531.35 577.4 533.65 579 533.65C580.6 533.65 581.4 531.35 583 531.35C584.6 531.35 585.4 533.65 587 533.65C588.6 533.65 589.4 531.35 591 531.35C592.6 531.35 593.4 533.65 595 533.65C596.6 533.65 597.4 531.35 599 531.35C600.6 531.35 601.4 533.65 603 533.65C604.6 533.65 605.4 531.35 607 531.35C608.6 531.35 609.4 533.65 611 533.65C612.6 533.65 613.4 531.35 615 531.35C616.6 531.35 617.4 533.65 619 533.65C620.6 533.65 621.4 531.35 623 531.35C624.6 531.35 625.4 533.65 627 533.65C628.6 533.65 629.4 531.35 631 531.35C632.6 531.35 633.4 533.65 635 533.65C636.6 533.65 637.4 531.35 639 531.35C640.6 531.35 641.4 533.65 643 533.65C644.6 533.65 645.4 531.35 647 531.35C648.6 531.35 649.4 533.65 651 533.65C652.6 533.65 653.4 531.35 655 531.35C656.6 531.35 657.4 533.65 659 533.65C660.6 533.65 661.4 531.35 663 531.35C664.6 531.35 665.4 533.65 667 533.65C668.2 533.65 668.8 531.92 670 531.92M682 533.65C683.6 533.65 684.4 531.35 686 531.35C687.6 531.35 688.4 533.65 690 533.65C691.6 533.65 692.4 531.35 694 531.35C695.6 531.35 696.4 533.65 698 533.65C699.6 533.65 700.4 531.35 702 531.35C703.2 531.35 703.8 533.08 705 533.08M714 533.65C715.6 533.65 716.4 531.35 718 531.35M58 550.65C59.6 550.65 60.4 548.35 62 548.35C63.6 548.35 64.4 550.65 66 550.65C67.6 550.65 68.4 548.35 70 548.35C71.6 548.35 72.4 550.65 74 550.65C75.6 550.65 76.4 548.35 78 548.35C79.6 548.35 80.4 550.65 82 550.65C83.6 550.65 84.4 548.35 86 548.35C87.6 548.35 88.4 550.65 90 550.65C91.6 550.65 92.4 548.35 94 548.35C95.6 548.35 96.4 550.65 98 550.65C99.6 550.65 100.4 548.35 102 548.35C103.6 548.35 104.4 550.65 106 550.65C107.6 550.65 108.4 548.35 110 548.35C111.6 548.35 112.4 550.65 114 550.65C115.6 550.65 116.4 548.35 118 548.35C119.6 548.35 120.4 550.65 122 550.65C123.6 550.65 124.4 548.35 126 548.35C127.6 548.35 128.4 550.65 130 550.65C130.4 550.65 130.6 550.08 131 550.08M162 550.65C163.6 550.65 164.4 548.35 166 548.35C167.6 548.35 168.4 550.65 170 550.65C171.6 550.65 172.4 548.35 174 548.35C175.6 548.35 176.4 550.65 178 550.65C179.6 550.65 180.4 548.35 182 548.35C183.6 548.35 184.4 550.65 186 550.65C187.6 550.65 188.4 548.35 190 548.35C190.4 548.35 190.6 548.92 191 548.92M216 550.65C217.6 550.65 218.4 548.35 220 548.35C221.6 548.35 222.4 550.65 224 550.65C225.6 550.65 226.4 548.35 228 548.35C229.6 548.35 230.4 550.65 232 550.65C233.6 550.65 234.4 548.35 236 548.35C237.6 548.35 238.4 550.65 240 550.65C241.6 550.65 242.4 548.35 244 548.35C245.6 548.35 246.4 550.65 248 550.65C249.6 550.65 250.4 548.35 252 548.35C253.6 548.35 254.4 550.65 256 550.65C257.6 550.65 258.4 548.35 260 548.35C261.6 548.35 262.4 550.65 264 550.65C265.6 550.65 266.4 548.35 268 548.35C269.6 548.35 270.4 550.65 272 550.65C273.6 550.65 274.4 548.35 276 548.35C277.6 548.35 278.4 550.65 280 550.65C281.6 550.65 282.4 548.35 284 548.35C285.6 548.35 286.4 550.65 288 550.65C288.4 550.65 288.6 550.08 289 550.08M357 550.65C358.6 550.65 359.4 548.35 361 548.35C362.6 548.35 363.4 550.65 365 550.65C366.6 550.65 367.4 548.35 369 548.35C370.6 548.35 371.4 550.65 373 550.65C374.6 550.65 375.4 548.35 377 548.35C378.6 548.35 379.4 550.65 381 550.65C382.6 550.65 383.4 548.35 385 548.35C386.6 548.35 387.4 550.65 389 550.65C390.6 550.65 391.4 548.35 393 548.35C394.6 548.35 395.4 550.65 397 550.65C398.6 550.65 399.4 548.35 401 548.35C402.6 548.35 403.4 550.65 405 550.65C406.6 550.65 407.4 548.35 409 548.35C410.6 548.35 411.4 550.65 413 550.65C414.6 550.65 415.4 548.35 417 548.35C418.6 548.35 419.4 550.65 421 550.65C422.6 550.65 423.4 548.35 425 548.35C426.6 548.35 427.4 550.65 429 550.65C430.6 550.65 431.4 548.35 433 548.35C434.6 548.35 435.4 550.65 437 550.65C438.6 550.65 439.4 548.35 441 548.35C442.6 548.35 443.4 550.65 445 550.65C446.6 550.65 447.4 548.35 449 548.35C450.6 548.35 451.4 550.65 453 550.65C454.6 550.65 455.4 548.35 457 548.35C458.6 548.35 459.4 550.65 461 550.65C462.6 550.65 463.4 548.35 465 548.35C466.6 548.35 467.4 550.65 469 550.65C470.6 550.65 471.4 548.35 473 548.35C474.6 548.35 475.4 550.65 477 550.65C478.6 550.65 479.4 548.35 481 548.35C482.6 548.35 483.4 550.65 485 550.65C486.6 550.65 487.4 548.35 489 548.35C490.6 548.35 491.4 550.65 493 550.65C494.6 550.65 495.4 548.35 497 548.35C498.6 548.35 499.4 550.65 501 550.65C502.6 550.65 503.4 548.35 505 548.35C506.6 548.35 507.4 550.65 509 550.65C510.6 550.65 511.4 548.35 513 548.35C514.6 548.35 515.4 550.65 517 550.65C518.6 550.65 519.4 548.35 521 548.35C522.6 548.35 523.4 550.65 525 550.65C526.6 550.65 527.4 548.35 529 548.35C530.6 548.35 531.4 550.65 533 550.65C534.6 550.65 535.4 548.35 537 548.35C538.6 548.35 539.4 550.65 541 550.65C542.6 550.65 543.4 548.35 545 548.35C546.6 548.35 547.4 550.65 549 550.65C550.6 550.65 551.4 548.35 553 548.35C554.6 548.35 555.4 550.65 557 550.65C558.6 550.65 559.4 548.35 561 548.35C562.6 548.35 563.4 550.65 565 550.65C566.6 550.65 567.4 548.35 569 548.35C570.6 548.35 571.4 550.65 573 550.65C574.6 550.65 575.4 548.35 577 548.35C578.6 548.35 579.4 550.65 581 550.65C582.6 550.65 583.4 548.35 585 548.35C586.6 548.35 587.4 550.65 589 550.65C590.6 550.65 591.4 548.35 593 548.35C594.6 548.35 595.4 550.65 597 550.65C598.6 550.65 599.4 548.35 601 548.35C602.6 548.35 603.4 550.65 605 550.65C606.6 550.65 607.4 548.35 609 548.35C610.6 548.35 611.4 550.65 613 550.65C614.6 550.65 615.4 548.35 617 548.35C618.6 548.35 619.4 550.65 621 550.65C622.6 550.65 623.4 548.35 625 548.35C626.6 548.35 627.4 550.65 629 550.65C630.2 550.65 630.8 548.92 632 548.92M644 550.65C645.6 550.65 646.4 548.35 648 548.35C649.6 548.35 650.4 550.65 652 550.65C653.6 550.65 654.4 548.35 656 548.35C657.6 548.35 658.4 550.65 660 550.65C661.6 550.65 662.4 548.35 664 548.35C665.2 548.35 665.8 550.08 667 550.08M676 550.65C677.6 550.65 678.4 548.35 680 548.35M58 567.65C59.6 567.65 60.4 565.35 62 565.35C63.6 565.35 64.4 567.65 66 567.65C67.6 567.65 68.4 565.35 70 565.35C71.6 565.35 72.4 567.65 74 567.65C75.6 567.65 76.4 565.35 78 565.35C79.6 565.35 80.4 567.65 82 567.65C83.6 567.65 84.4 565.35 86 565.35C87.6 565.35 88.4 567.65 90 567.65C91.6 567.65 92.4 565.35 94 565.35C95.6 565.35 96.4 567.65 98 567.65C99.6 567.65 100.4 565.35 102 565.35C103.6 565.35 104.4 567.65 106 567.65C107.6 567.65 108.4 565.35 110 565.35C111.6 565.35 112.4 567.65 114 567.65C115.6 567.65 116.4 565.35 118 565.35C119.6 565.35 120.4 567.65 122 567.65C123.2 567.65 123.8 565.92 125 565.92M157 567.65C158.6 567.65 159.4 565.35 161 565.35C162.6 565.35 163.4 567.65 165 567.65C166.6 567.65 167.4 565.35 169 565.35C170.6 565.35 171.4 567.65 173 567.65C174.6 567.65 175.4 565.35 177 565.35C178.6 565.35 179.4 567.65 181 567.65C182.6 567.65 183.4 565.35 185 565.35C186.6 565.35 187.4 567.65 189 567.65C190.6 567.65 191.4 565.35 193 565.35C194.6 565.35 195.4 567.65 197 567.65C198.6 567.65 199.4 565.35 201 565.35C202.6 565.35 203.4 567.65 205 567.65C206.6 567.65 207.4 565.35 209 565.35C210.6 565.35 211.4 567.65 213 567.65C214.6 567.65 215.4 565.35 217 565.35C218.6 565.35 219.4 567.65 221 567.65C222.2 567.65 222.8 565.92 224 565.92M235 567.65C236.6 567.65 237.4 565.35 239 565.35C240.6 565.35 241.4 567.65 243 567.65C244.6 567.65 245.4 565.35 247 565.35C248.6 565.35 249.4 567.65 251 567.65C252.6 567.65 253.4 565.35 255 565.35C256.6 565.35 257.4 567.65 259 567.65C260.6 567.65 261.4 565.35 263 565.35C264.6 565.35 265.4 567.65 267 567.65C268.6 567.65 269.4 565.35 271 565.35C272.6 565.35 273.4 567.65 275 567.65C276.6 567.65 277.4 565.35 279 565.35C280.6 565.35 281.4 567.65 283 567.65C284.6 567.65 285.4 565.35 287 565.35C288.6 565.35 289.4 567.65 291 567.65C292.6 567.65 293.4 565.35 295 565.35C296.6 565.35 297.4 567.65 299 567.65C300.6 567.65 301.4 565.35 303 565.35C304.6 565.35 305.4 567.65 307 567.65C308.6 567.65 309.4 565.35 311 565.35C312.6 565.35 313.4 567.65 315 567.65C316.6 567.65 317.4 565.35 319 565.35C319.4 565.35 319.6 565.92 320 565.92M336 567.65C337.6 567.65 338.4 565.35 340 565.35C341.6 565.35 342.4 567.65 344 567.65C345.6 567.65 346.4 565.35 348 565.35C349.6 565.35 350.4 567.65 352 567.65C353.6 567.65 354.4 565.35 356 565.35C357.6 565.35 358.4 567.65 360 567.65C361.6 567.65 362.4 565.35 364 565.35C365.6 565.35 366.4 567.65 368 567.65C369.6 567.65 370.4 565.35 372 565.35C373.6 565.35 374.4 567.65 376 567.65C377.6 567.65 378.4 565.35 380 565.35C381.6 565.35 382.4 567.65 384 567.65C385.6 567.65 386.4 565.35 388 565.35C389.6 565.35 390.4 567.65 392 567.65C393.6 567.65 394.4 565.35 396 565.35C397.6 565.35 398.4 567.65 400 567.65C401.6 567.65 402.4 565.35 404 565.35C405.6 565.35 406.4 567.65 408 567.65C409.6 567.65 410.4 565.35 412 565.35C413.6 565.35 414.4 567.65 416 567.65C417.6 567.65 418.4 565.35 420 565.35C421.6 565.35 422.4 567.65 424 567.65C425.6 567.65 426.4 565.35 428 565.35C429.6 565.35 430.4 567.65 432 567.65C433.6 567.65 434.4 565.35 436 565.35C437.6 565.35 438.4 567.65 440 567.65C441.6 567.65 442.4 565.35 444 565.35C445.6 565.35 446.4 567.65 448 567.65C449.6 567.65 450.4 565.35 452 565.35C453.6 565.35 454.4 567.65 456 567.65C457.6 567.65 458.4 565.35 460 565.35C461.6 565.35 462.4 567.65 464 567.65C465.6 567.65 466.4 565.35 468 565.35C469.6 565.35 470.4 567.65 472 567.65C473.6 567.65 474.4 565.35 476 565.35C477.6 565.35 478.4 567.65 480 567.65C481.6 567.65 482.4 565.35 484 565.35C485.6 565.35 486.4 567.65 488 567.65C489.6 567.65 490.4 565.35 492 565.35C493.6 565.35 494.4 567.65 496 567.65C497.6 567.65 498.4 565.35 500 565.35C501.6 565.35 502.4 567.65 504 567.65C505.6 567.65 506.4 565.35 508 565.35C509.6 565.35 510.4 567.65 512 567.65C513.6 567.65 514.4 565.35 516 565.35C517.6 565.35 518.4 567.65 520 567.65C521.6 567.65 522.4 565.35 524 565.35C525.6 565.35 526.4 567.65 528 567.65C529.6 567.65 530.4 565.35 532 565.35C533.6 565.35 534.4 567.65 536 567.65C537.6 567.65 538.4 565.35 540 565.35C541.6 565.35 542.4 567.65 544 567.65C545.6 567.65 546.4 565.35 548 565.35C549.6 565.35 550.4 567.65 552 567.65C553.6 567.65 554.4 565.35 556 565.35C557.6 565.35 558.4 567.65 560 567.65C561.6 567.65 562.4 565.35 564 565.35C565.6 565.35 566.4 567.65 568 567.65C569.6 567.65 570.4 565.35 572 565.35C573.6 565.35 574.4 567.65 576 567.65C577.6 567.65 578.4 565.35 580 565.35C581.6 565.35 582.4 567.65 584 567.65C585.6 567.65 586.4 565.35 588 565.35C589.6 565.35 590.4 567.65 592 567.65C593.6 567.65 594.4 565.35 596 565.35C597.6 565.35 598.4 567.65 600 567.65C601.6 567.65 602.4 565.35 604 565.35C605.6 565.35 606.4 567.65 608 567.65C609.2 567.65 609.8 565.92 611 565.92M623 567.65C624.6 567.65 625.4 565.35 627 565.35C628.6 565.35 629.4 567.65 631 567.65C632.6 567.65 633.4 565.35 635 565.35C636.2 565.35 636.8 567.08 638 567.08M39 584.65C40.6 584.65 41.4 582.35 43 582.35C44.6 582.35 45.4 584.65 47 584.65C48.6 584.65 49.4 582.35 51 582.35C52.6 582.35 53.4 584.65 55 584.65C56.6 584.65 57.4 582.35 59 582.35C60.6 582.35 61.4 584.65 63 584.65C64.6 584.65 65.4 582.35 67 582.35C68.6 582.35 69.4 584.65 71 584.65C72.6 584.65 73.4 582.35 75 582.35C76.6 582.35 77.4 584.65 79 584.65C80.6 584.65 81.4 582.35 83 582.35C84.6 582.35 85.4 584.65 87 584.65C88.6 584.65 89.4 582.35 91 582.35C92.6 582.35 93.4 584.65 95 584.65C96.6 584.65 97.4 582.35 99 582.35C100.6 582.35 101.4 584.65 103 584.65C104.6 584.65 105.4 582.35 107 582.35C108.6 582.35 109.4 584.65 111 584.65C112.6 584.65 113.4 582.35 115 582.35C116.6 582.35 117.4 584.65 119 584.65C120.6 584.65 121.4 582.35 123 582.35C124.6 582.35 125.4 584.65 127 584.65C128.6 584.65 129.4 582.35 131 582.35C132.6 582.35 133.4 584.65 135 584.65C136.6 584.65 137.4 582.35 139 582.35C140.6 582.35 141.4 584.65 143 584.65C144.6 584.65 145.4 582.35 147 582.35C148.6 582.35 149.4 584.65 151 584.65C152.6 584.65 153.4 582.35 155 582.35C156.6 582.35 157.4 584.65 159 584.65C160.6 584.65 161.4 582.35 163 582.35C164.6 582.35 165.4 584.65 167 584.65C168.6 584.65 169.4 582.35 171 582.35C172.6 582.35 173.4 584.65 175 584.65C176.6 584.65 177.4 582.35 179 582.35C180.6 582.35 181.4 584.65 183 584.65C183.8 584.65 184.2 583.5 185 583.5M202 584.65C203.6 584.65 204.4 582.35 206 582.35C207.6 582.35 208.4 584.65 210 584.65C211.6 584.65 212.4 582.35 214 582.35C215.6 582.35 216.4 584.65 218 584.65C219.6 584.65 220.4 582.35 222 582.35C222.8 582.35 223.2 583.5 224 583.5M228 584.65C229.6 584.65 230.4 582.35 232 582.35C233.6 582.35 234.4 584.65 236 584.65C237.6 584.65 238.4 582.35 240 582.35C241.6 582.35 242.4 584.65 244 584.65C245.6 584.65 246.4 582.35 248 582.35C249.6 582.35 250.4 584.65 252 584.65C253.6 584.65 254.4 582.35 256 582.35C257.6 582.35 258.4 584.65 260 584.65C261.6 584.65 262.4 582.35 264 582.35C265.6 582.35 266.4 584.65 268 584.65C269.6 584.65 270.4 582.35 272 582.35C273.6 582.35 274.4 584.65 276 584.65C277.6 584.65 278.4 582.35 280 582.35C281.6 582.35 282.4 584.65 284 584.65C285.6 584.65 286.4 582.35 288 582.35C289.6 582.35 290.4 584.65 292 584.65C293.6 584.65 294.4 582.35 296 582.35C297.6 582.35 298.4 584.65 300 584.65C301.6 584.65 302.4 582.35 304 582.35C305.6 582.35 306.4 584.65 308 584.65C309.6 584.65 310.4 582.35 312 582.35C313.6 582.35 314.4 584.65 316 584.65C317.6 584.65 318.4 582.35 320 582.35C321.6 582.35 322.4 584.65 324 584.65C325.6 584.65 326.4 582.35 328 582.35C329.6 582.35 330.4 584.65 332 584.65C333.6 584.65 334.4 582.35 336 582.35C337.6 582.35 338.4 584.65 340 584.65C341.6 584.65 342.4 582.35 344 582.35C345.6 582.35 346.4 584.65 348 584.65C349.6 584.65 350.4 582.35 352 582.35M356 584.65C357.6 584.65 358.4 582.35 360 582.35C361.6 582.35 362.4 584.65 364 584.65C365.6 584.65 366.4 582.35 368 582.35C369.6 582.35 370.4 584.65 372 584.65C373.6 584.65 374.4 582.35 376 582.35C377.6 582.35 378.4 584.65 380 584.65C381.6 584.65 382.4 582.35 384 582.35C385.6 582.35 386.4 584.65 388 584.65C389.6 584.65 390.4 582.35 392 582.35C393.6 582.35 394.4 584.65 396 584.65C397.6 584.65 398.4 582.35 400 582.35C401.6 582.35 402.4 584.65 404 584.65C405.6 584.65 406.4 582.35 408 582.35C409.6 582.35 410.4 584.65 412 584.65C413.6 584.65 414.4 582.35 416 582.35C417.6 582.35 418.4 584.65 420 584.65C421.6 584.65 422.4 582.35 424 582.35C425.6 582.35 426.4 584.65 428 584.65C428.4 584.65 428.6 584.08 429 584.08M574 584.65C575.6 584.65 576.4 582.35 578 582.35C579.6 582.35 580.4 584.65 582 584.65C583.6 584.65 584.4 582.35 586 582.35C587.6 582.35 588.4 584.65 590 584.65C591.6 584.65 592.4 582.35 594 582.35C595.6 582.35 596.4 584.65 598 584.65C599.6 584.65 600.4 582.35 602 582.35C603.6 582.35 604.4 584.65 606 584.65C607.6 584.65 608.4 582.35 610 582.35C610.4 582.35 610.6 582.92 611 582.92M710 584.65C711.6 584.65 712.4 582.35 714 582.35C715.6 582.35 716.4 584.65 718 584.65C719.6 584.65 720.4 582.35 722 582.35C723.6 582.35 724.4 584.65 726 584.65C727.6 584.65 728.4 582.35 730 582.35C731.6 582.35 732.4 584.65 734 584.65C735.6 584.65 736.4 582.35 738 582.35C739.6 582.35 740.4 584.65 742 584.65C743.6 584.65 744.4 582.35 746 582.35C747.6 582.35 748.4 584.65 750 584.65C751.6 584.65 752.4 582.35 754 582.35C755.6 582.35 756.4 584.65 758 584.65C758.8 584.65 759.2 583.5 760 583.5M772 584.65C773.6 584.65 774.4 582.35 776 582.35C777.6 582.35 778.4 584.65 780 584.65C781.6 584.65 782.4 582.35 784 582.35C785.6 582.35 786.4 584.65 788 584.65C789.6 584.65 790.4 582.35 792 582.35C792.8 582.35 793.2 583.5 794 583.5M173 601.65C174.6 601.65 175.4 599.35 177 599.35C178.6 599.35 179.4 601.65 181 601.65C182.6 601.65 183.4 599.35 185 599.35C186.2 599.35 186.8 601.08 188 601.08M197 601.65C198.6 601.65 199.4 599.35 201 599.35C202.6 599.35 203.4 601.65 205 601.65C206.6 601.65 207.4 599.35 209 599.35C210.6 599.35 211.4 601.65 213 601.65C214.6 601.65 215.4 599.35 217 599.35C218.6 599.35 219.4 601.65 221 601.65C222.6 601.65 223.4 599.35 225 599.35C226.6 599.35 227.4 601.65 229 601.65C230.6 601.65 231.4 599.35 233 599.35M329 601.65C330.6 601.65 331.4 599.35 333 599.35C334.6 599.35 335.4 601.65 337 601.65C337.4 601.65 337.6 601.08 338 601.08M396 601.65C397.6 601.65 398.4 599.35 400 599.35C401.6 599.35 402.4 601.65 404 601.65C405.6 601.65 406.4 599.35 408 599.35C409.6 599.35 410.4 601.65 412 601.65C413.6 601.65 414.4 599.35 416 599.35C417.6 599.35 418.4 601.65 420 601.65C421.6 601.65 422.4 599.35 424 599.35C425.6 599.35 426.4 601.65 428 601.65C429.6 601.65 430.4 599.35 432 599.35C433.6 599.35 434.4 601.65 436 601.65C436.8 601.65 437.2 600.5 438 600.5M442 601.65C443.6 601.65 444.4 599.35 446 599.35C447.6 599.35 448.4 601.65 450 601.65C451.6 601.65 452.4 599.35 454 599.35C455.6 599.35 456.4 601.65 458 601.65C459.6 601.65 460.4 599.35 462 599.35C463.6 599.35 464.4 601.65 466 601.65C467.6 601.65 468.4 599.35 470 599.35C471.6 599.35 472.4 601.65 474 601.65C475.6 601.65 476.4 599.35 478 599.35C479.6 599.35 480.4 601.65 482 601.65C483.6 601.65 484.4 599.35 486 599.35C486.8 599.35 487.2 600.5 488 600.5M492 601.65C493.6 601.65 494.4 599.35 496 599.35C497.6 599.35 498.4 601.65 500 601.65C501.6 601.65 502.4 599.35 504 599.35C505.6 599.35 506.4 601.65 508 601.65C509.6 601.65 510.4 599.35 512 599.35C513.6 599.35 514.4 601.65 516 601.65C517.6 601.65 518.4 599.35 520 599.35C521.6 599.35 522.4 601.65 524 601.65C525.6 601.65 526.4 599.35 528 599.35C529.6 599.35 530.4 601.65 532 601.65C533.6 601.65 534.4 599.35 536 599.35C537.6 599.35 538.4 601.65 540 601.65C541.6 601.65 542.4 599.35 544 599.35C544.4 599.35 544.6 599.92 545 599.92M549 601.65C550.6 601.65 551.4 599.35 553 599.35C554.6 599.35 555.4 601.65 557 601.65C558.6 601.65 559.4 599.35 561 599.35C562.6 599.35 563.4 601.65 565 601.65C566.6 601.65 567.4 599.35 569 599.35C570.6 599.35 571.4 601.65 573 601.65C574.6 601.65 575.4 599.35 577 599.35C578.6 599.35 579.4 601.65 581 601.65C582.6 601.65 583.4 599.35 585 599.35C586.6 599.35 587.4 601.65 589 601.65C590.6 601.65 591.4 599.35 593 599.35C594.6 599.35 595.4 601.65 597 601.65C598.6 601.65 599.4 599.35 601 599.35C602.6 599.35 603.4 601.65 605 601.65C606.6 601.65 607.4 599.35 609 599.35C610.6 599.35 611.4 601.65 613 601.65C614.6 601.65 615.4 599.35 617 599.35C618.6 599.35 619.4 601.65 621 601.65C622.6 601.65 623.4 599.35 625 599.35C626.6 599.35 627.4 601.65 629 601.65C630.6 601.65 631.4 599.35 633 599.35C634.6 599.35 635.4 601.65 637 601.65C638.6 601.65 639.4 599.35 641 599.35C642.6 599.35 643.4 601.65 645 601.65C646.6 601.65 647.4 599.35 649 599.35C650.6 599.35 651.4 601.65 653 601.65C654.6 601.65 655.4 599.35 657 599.35C658.6 599.35 659.4 601.65 661 601.65C662.6 601.65 663.4 599.35 665 599.35C666.6 599.35 667.4 601.65 669 601.65C670.6 601.65 671.4 599.35 673 599.35M685 601.65C686.6 601.65 687.4 599.35 689 599.35C690.6 599.35 691.4 601.65 693 601.65C694.6 601.65 695.4 599.35 697 599.35C698.6 599.35 699.4 601.65 701 601.65C702.6 601.65 703.4 599.35 705 599.35C706.6 599.35 707.4 601.65 709 601.65C710.6 601.65 711.4 599.35 713 599.35C714.6 599.35 715.4 601.65 717 601.65C718.6 601.65 719.4 599.35 721 599.35C722.6 599.35 723.4 601.65 725 601.65C726.6 601.65 727.4 599.35 729 599.35M35 618.65C36.6 618.65 37.4 616.35 39 616.35C40.6 616.35 41.4 618.65 43 618.65C44.6 618.65 45.4 616.35 47 616.35C48.6 616.35 49.4 618.65 51 618.65C52.6 618.65 53.4 616.35 55 616.35C56.6 616.35 57.4 618.65 59 618.65C60.6 618.65 61.4 616.35 63 616.35C64.6 616.35 65.4 618.65 67 618.65C68.6 618.65 69.4 616.35 71 616.35C72.6 616.35 73.4 618.65 75 618.65C76.6 618.65 77.4 616.35 79 616.35C80.6 616.35 81.4 618.65 83 618.65C84.6 618.65 85.4 616.35 87 616.35C88.6 616.35 89.4 618.65 91 618.65C92.6 618.65 93.4 616.35 95 616.35C96.6 616.35 97.4 618.65 99 618.65C100.6 618.65 101.4 616.35 103 616.35C104.6 616.35 105.4 618.65 107 618.65C108.6 618.65 109.4 616.35 111 616.35C112.6 616.35 113.4 618.65 115 618.65C116.6 618.65 117.4 616.35 119 616.35C120.6 616.35 121.4 618.65 123 618.65C124.6 618.65 125.4 616.35 127 616.35C128.6 616.35 129.4 618.65 131 618.65C132.6 618.65 133.4 616.35 135 616.35C136.6 616.35 137.4 618.65 139 618.65C140.6 618.65 141.4 616.35 143 616.35C144.6 616.35 145.4 618.65 147 618.65C148.6 618.65 149.4 616.35 151 616.35C152.6 616.35 153.4 618.65 155 618.65C156.6 618.65 157.4 616.35 159 616.35M171 618.65C172.6 618.65 173.4 616.35 175 616.35C176.6 616.35 177.4 618.65 179 618.65C180.6 618.65 181.4 616.35 183 616.35C184.6 616.35 185.4 618.65 187 618.65C188.6 618.65 189.4 616.35 191 616.35C192.6 616.35 193.4 618.65 195 618.65C196.6 618.65 197.4 616.35 199 616.35C200.6 616.35 201.4 618.65 203 618.65C204.6 618.65 205.4 616.35 207 616.35C208.6 616.35 209.4 618.65 211 618.65C211.8 618.65 212.2 617.5 213 617.5M217 618.65C218.6 618.65 219.4 616.35 221 616.35C222.6 616.35 223.4 618.65 225 618.65C226.6 618.65 227.4 616.35 229 616.35C230.6 616.35 231.4 618.65 233 618.65C234.6 618.65 235.4 616.35 237 616.35C238.6 616.35 239.4 618.65 241 618.65C242.6 618.65 243.4 616.35 245 616.35C246.6 616.35 247.4 618.65 249 618.65C250.6 618.65 251.4 616.35 253 616.35C254.6 616.35 255.4 618.65 257 618.65C258.6 618.65 259.4 616.35 261 616.35C261.8 616.35 262.2 617.5 263 617.5M268 618.65C269.6 618.65 270.4 616.35 272 616.35C273.6 616.35 274.4 618.65 276 618.65C277.6 618.65 278.4 616.35 280 616.35C281.6 616.35 282.4 618.65 284 618.65C285.6 618.65 286.4 616.35 288 616.35C289.6 616.35 290.4 618.65 292 618.65C293.6 618.65 294.4 616.35 296 616.35C297.6 616.35 298.4 618.65 300 618.65C301.6 618.65 302.4 616.35 304 616.35C305.6 616.35 306.4 618.65 308 618.65C309.6 618.65 310.4 616.35 312 616.35C313.6 616.35 314.4 618.65 316 618.65C317.6 618.65 318.4 616.35 320 616.35C320.4 616.35 320.6 616.92 321 616.92M325 618.65C326.6 618.65 327.4 616.35 329 616.35C330.6 616.35 331.4 618.65 333 618.65C334.6 618.65 335.4 616.35 337 616.35C338.6 616.35 339.4 618.65 341 618.65C342.6 618.65 343.4 616.35 345 616.35C346.6 616.35 347.4 618.65 349 618.65C350.6 618.65 351.4 616.35 353 616.35C354.6 616.35 355.4 618.65 357 618.65C358.6 618.65 359.4 616.35 361 616.35C362.6 616.35 363.4 618.65 365 618.65C366.6 618.65 367.4 616.35 369 616.35C370.6 616.35 371.4 618.65 373 618.65C374.6 618.65 375.4 616.35 377 616.35C378.6 616.35 379.4 618.65 381 618.65C382.6 618.65 383.4 616.35 385 616.35C386.6 616.35 387.4 618.65 389 618.65C390.6 618.65 391.4 616.35 393 616.35C394.6 616.35 395.4 618.65 397 618.65C397.4 618.65 397.6 618.08 398 618.08M410 618.65C411.6 618.65 412.4 616.35 414 616.35C415.6 616.35 416.4 618.65 418 618.65C419.6 618.65 420.4 616.35 422 616.35C423.6 616.35 424.4 618.65 426 618.65C427.6 618.65 428.4 616.35 430 616.35C431.6 616.35 432.4 618.65 434 618.65C435.6 618.65 436.4 616.35 438 616.35C439.6 616.35 440.4 618.65 442 618.65C443.6 618.65 444.4 616.35 446 616.35C447.6 616.35 448.4 618.65 450 618.65C451.6 618.65 452.4 616.35 454 616.35M486 618.65C487.6 618.65 488.4 616.35 490 616.35C491.6 616.35 492.4 618.65 494 618.65C495.6 618.65 496.4 616.35 498 616.35C499.6 616.35 500.4 618.65 502 618.65C503.6 618.65 504.4 616.35 506 616.35C507.6 616.35 508.4 618.65 510 618.65C511.6 618.65 512.4 616.35 514 616.35C515.6 616.35 516.4 618.65 518 618.65C519.6 618.65 520.4 616.35 522 616.35C523.6 616.35 524.4 618.65 526 618.65C527.6 618.65 528.4 616.35 530 616.35C531.6 616.35 532.4 618.65 534 618.65C535.6 618.65 536.4 616.35 538 616.35C539.6 616.35 540.4 618.65 542 618.65C543.6 618.65 544.4 616.35 546 616.35C547.6 616.35 548.4 618.65 550 618.65C551.6 618.65 552.4 616.35 554 616.35C555.6 616.35 556.4 618.65 558 618.65C558.8 618.65 559.2 617.5 560 617.5M572 618.65C573.6 618.65 574.4 616.35 576 616.35C577.6 616.35 578.4 618.65 580 618.65C581.6 618.65 582.4 616.35 584 616.35C585.6 616.35 586.4 618.65 588 618.65C589.6 618.65 590.4 616.35 592 616.35C593.2 616.35 593.8 618.08 595 618.08M604 618.65C605.6 618.65 606.4 616.35 608 616.35M58 635.65C59.6 635.65 60.4 633.35 62 633.35C63.6 633.35 64.4 635.65 66 635.65C67.6 635.65 68.4 633.35 70 633.35C71.6 633.35 72.4 635.65 74 635.65C75.6 635.65 76.4 633.35 78 633.35C79.6 633.35 80.4 635.65 82 635.65C83.6 635.65 84.4 633.35 86 633.35C87.6 633.35 88.4 635.65 90 635.65C91.6 635.65 92.4 633.35 94 633.35C95.6 633.35 96.4 635.65 98 635.65C99.6 635.65 100.4 633.35 102 633.35C103.6 633.35 104.4 635.65 106 635.65C107.6 635.65 108.4 633.35 110 633.35C111.6 633.35 112.4 635.65 114 635.65C115.6 635.65 116.4 633.35 118 633.35C119.6 633.35 120.4 635.65 122 635.65C123.6 635.65 124.4 633.35 126 633.35C127.6 633.35 128.4 635.65 130 635.65C131.6 635.65 132.4 633.35 134 633.35C135.6 633.35 136.4 635.65 138 635.65C139.6 635.65 140.4 633.35 142 633.35C143.6 633.35 144.4 635.65 146 635.65C147.6 635.65 148.4 633.35 150 633.35C151.6 633.35 152.4 635.65 154 635.65C155.6 635.65 156.4 633.35 158 633.35C159.6 633.35 160.4 635.65 162 635.65C163.6 635.65 164.4 633.35 166 633.35C167.6 633.35 168.4 635.65 170 635.65C171.6 635.65 172.4 633.35 174 633.35C175.6 633.35 176.4 635.65 178 635.65C178.8 635.65 179.2 634.5 180 634.5M213 635.65C214.6 635.65 215.4 633.35 217 633.35C218.6 633.35 219.4 635.65 221 635.65C222.6 635.65 223.4 633.35 225 633.35C226.6 633.35 227.4 635.65 229 635.65C230.6 635.65 231.4 633.35 233 633.35C234.6 633.35 235.4 635.65 237 635.65C238.6 635.65 239.4 633.35 241 633.35C242.6 633.35 243.4 635.65 245 635.65C246.6 635.65 247.4 633.35 249 633.35C250.6 633.35 251.4 635.65 253 635.65C254.6 635.65 255.4 633.35 257 633.35C258.6 633.35 259.4 635.65 261 635.65C262.6 635.65 263.4 633.35 265 633.35C266.6 633.35 267.4 635.65 269 635.65C270.6 635.65 271.4 633.35 273 633.35C274.6 633.35 275.4 635.65 277 635.65C278.6 635.65 279.4 633.35 281 633.35C282.6 633.35 283.4 635.65 285 635.65C286.6 635.65 287.4 633.35 289 633.35C290.6 633.35 291.4 635.65 293 635.65C294.6 635.65 295.4 633.35 297 633.35C298.6 633.35 299.4 635.65 301 635.65C302.6 635.65 303.4 633.35 305 633.35C306.6 633.35 307.4 635.65 309 635.65C310.6 635.65 311.4 633.35 313 633.35C314.6 633.35 315.4 635.65 317 635.65C318.6 635.65 319.4 633.35 321 633.35C322.6 633.35 323.4 635.65 325 635.65C326.6 635.65 327.4 633.35 329 633.35C330.6 633.35 331.4 635.65 333 635.65C333.8 635.65 334.2 634.5 335 634.5M346 635.65C347.6 635.65 348.4 633.35 350 633.35C351.6 633.35 352.4 635.65 354 635.65C355.6 635.65 356.4 633.35 358 633.35C359.6 633.35 360.4 635.65 362 635.65C363.6 635.65 364.4 633.35 366 633.35C367.6 633.35 368.4 635.65 370 635.65C371.6 635.65 372.4 633.35 374 633.35C375.2 633.35 375.8 635.08 377 635.08M531 635.65C532.6 635.65 533.4 633.35 535 633.35C536.6 633.35 537.4 635.65 539 635.65C540.6 635.65 541.4 633.35 543 633.35C544.6 633.35 545.4 635.65 547 635.65C548.6 635.65 549.4 633.35 551 633.35C552.6 633.35 553.4 635.65 555 635.65C556.6 635.65 557.4 633.35 559 633.35C560.6 633.35 561.4 635.65 563 635.65C564.6 635.65 565.4 633.35 567 633.35C568.6 633.35 569.4 635.65 571 635.65C572.6 635.65 573.4 633.35 575 633.35C576.6 633.35 577.4 635.65 579 635.65C580.6 635.65 581.4 633.35 583 633.35C584.6 633.35 585.4 635.65 587 635.65C588.6 635.65 589.4 633.35 591 633.35C592.6 633.35 593.4 635.65 595 635.65C596.6 635.65 597.4 633.35 599 633.35C600.6 633.35 601.4 635.65 603 635.65C604.6 635.65 605.4 633.35 607 633.35C608.6 633.35 609.4 635.65 611 635.65C612.6 635.65 613.4 633.35 615 633.35C616.6 633.35 617.4 635.65 619 635.65C620.6 635.65 621.4 633.35 623 633.35C624.6 633.35 625.4 635.65 627 635.65C628.6 635.65 629.4 633.35 631 633.35C632.6 633.35 633.4 635.65 635 635.65C636.6 635.65 637.4 633.35 639 633.35C640.6 633.35 641.4 635.65 643 635.65C643.8 635.65 644.2 634.5 645 634.5M657 635.65C658.6 635.65 659.4 633.35 661 633.35C662.6 633.35 663.4 635.65 665 635.65C666.6 635.65 667.4 633.35 669 633.35C670.6 633.35 671.4 635.65 673 635.65C674.6 635.65 675.4 633.35 677 633.35C678.2 633.35 678.8 635.08 680 635.08M689 635.65C690.6 635.65 691.4 633.35 693 633.35M58 652.65C59.6 652.65 60.4 650.35 62 650.35C63.6 650.35 64.4 652.65 66 652.65C67.6 652.65 68.4 650.35 70 650.35C71.6 650.35 72.4 652.65 74 652.65C75.6 652.65 76.4 650.35 78 650.35C79.6 650.35 80.4 652.65 82 652.65C83.6 652.65 84.4 650.35 86 650.35C87.6 650.35 88.4 652.65 90 652.65C91.6 652.65 92.4 650.35 94 650.35C95.6 650.35 96.4 652.65 98 652.65C99.6 652.65 100.4 650.35 102 650.35C103.6 650.35 104.4 652.65 106 652.65C107.6 652.65 108.4 650.35 110 650.35C111.6 650.35 112.4 652.65 114 652.65C115.6 652.65 116.4 650.35 118 650.35C119.6 650.35 120.4 652.65 122 652.65C123.6 652.65 124.4 650.35 126 650.35C127.6 650.35 128.4 652.65 130 652.65C131.6 652.65 132.4 650.35 134 650.35C135.6 650.35 136.4 652.65 138 652.65C139.6 652.65 140.4 650.35 142 650.35C143.6 650.35 144.4 652.65 146 652.65C147.6 652.65 148.4 650.35 150 650.35C151.6 650.35 152.4 652.65 154 652.65C155.6 652.65 156.4 650.35 158 650.35C159.6 650.35 160.4 652.65 162 652.65C163.6 652.65 164.4 650.35 166 650.35C167.6 650.35 168.4 652.65 170 652.65C171.6 652.65 172.4 650.35 174 650.35C175.6 650.35 176.4 652.65 178 652.65C178.8 652.65 179.2 651.5 180 651.5M213 652.65C214.6 652.65 215.4 650.35 217 650.35C218.6 650.35 219.4 652.65 221 652.65C222.6 652.65 223.4 650.35 225 650.35C226.6 650.35 227.4 652.65 229 652.65C230.6 652.65 231.4 650.35 233 650.35C234.6 650.35 235.4 652.65 237 652.65C238.6 652.65 239.4 650.35 241 650.35C242.6 650.35 243.4 652.65 245 652.65C246.6 652.65 247.4 650.35 249 650.35C250.6 650.35 251.4 652.65 253 652.65C254.6 652.65 255.4 650.35 257 650.35C258.6 650.35 259.4 652.65 261 652.65C262.6 652.65 263.4 650.35 265 650.35C266.6 650.35 267.4 652.65 269 652.65C270.6 652.65 271.4 650.35 273 650.35C274.6 650.35 275.4 652.65 277 652.65C278.6 652.65 279.4 650.35 281 650.35C282.6 650.35 283.4 652.65 285 652.65C286.6 652.65 287.4 650.35 289 650.35C290.6 650.35 291.4 652.65 293 652.65C294.6 652.65 295.4 650.35 297 650.35C298.6 650.35 299.4 652.65 301 652.65C302.6 652.65 303.4 650.35 305 650.35C306.6 650.35 307.4 652.65 309 652.65C310.6 652.65 311.4 650.35 313 650.35C314.6 650.35 315.4 652.65 317 652.65C318.6 652.65 319.4 650.35 321 650.35C322.6 650.35 323.4 652.65 325 652.65C326.6 652.65 327.4 650.35 329 650.35C330.6 650.35 331.4 652.65 333 652.65C333.8 652.65 334.2 651.5 335 651.5M346 652.65C347.6 652.65 348.4 650.35 350 650.35C351.6 650.35 352.4 652.65 354 652.65C355.6 652.65 356.4 650.35 358 650.35C359.6 650.35 360.4 652.65 362 652.65C363.6 652.65 364.4 650.35 366 650.35C367.6 650.35 368.4 652.65 370 652.65C371.6 652.65 372.4 650.35 374 650.35C375.2 650.35 375.8 652.08 377 652.08M393 652.65C394.6 652.65 395.4 650.35 397 650.35C398.6 650.35 399.4 652.65 401 652.65C402.6 652.65 403.4 650.35 405 650.35C406.6 650.35 407.4 652.65 409 652.65C410.6 652.65 411.4 650.35 413 650.35C414.6 650.35 415.4 652.65 417 652.65C418.6 652.65 419.4 650.35 421 650.35C422.6 650.35 423.4 652.65 425 652.65C426.6 652.65 427.4 650.35 429 650.35C430.6 650.35 431.4 652.65 433 652.65C434.6 652.65 435.4 650.35 437 650.35C438.6 650.35 439.4 652.65 441 652.65C442.6 652.65 443.4 650.35 445 650.35C446.6 650.35 447.4 652.65 449 652.65C450.6 652.65 451.4 650.35 453 650.35C454.6 650.35 455.4 652.65 457 652.65C458.6 652.65 459.4 650.35 461 650.35C462.6 650.35 463.4 652.65 465 652.65C466.6 652.65 467.4 650.35 469 650.35C470.6 650.35 471.4 652.65 473 652.65C474.6 652.65 475.4 650.35 477 650.35C478.6 650.35 479.4 652.65 481 652.65C482.6 652.65 483.4 650.35 485 650.35C486.6 650.35 487.4 652.65 489 652.65C490.6 652.65 491.4 650.35 493 650.35C494.6 650.35 495.4 652.65 497 652.65C498.6 652.65 499.4 650.35 501 650.35C502.6 650.35 503.4 652.65 505 652.65C506.6 652.65 507.4 650.35 509 650.35C510.6 650.35 511.4 652.65 513 652.65C514.6 652.65 515.4 650.35 517 650.35C518.6 650.35 519.4 652.65 521 652.65C522.6 652.65 523.4 650.35 525 650.35C526.6 650.35 527.4 652.65 529 652.65C530.6 652.65 531.4 650.35 533 650.35C534.6 650.35 535.4 652.65 537 652.65C538.6 652.65 539.4 650.35 541 650.35C542.6 650.35 543.4 652.65 545 652.65C546.6 652.65 547.4 650.35 549 650.35C550.6 650.35 551.4 652.65 553 652.65C554.6 652.65 555.4 650.35 557 650.35C558.6 650.35 559.4 652.65 561 652.65C562.6 652.65 563.4 650.35 565 650.35C566.6 650.35 567.4 652.65 569 652.65C570.6 652.65 571.4 650.35 573 650.35C574.6 650.35 575.4 652.65 577 652.65C577.8 652.65 578.2 651.5 579 651.5" fill="none" stroke="#ff0000" stroke-width="1"/></svg>
</div>
<!-- p_bottom -->
<div id="hscroll"><div class="thumb"></div><div class="split"><i></i></div></div>
<div id="tabbar">
<svg style="left:10px;top:3px" width="64" height="13" viewBox="0 0 64 13"><g fill="#a6a6a6"><rect x="2" y="1.5" width="1.6" height="10"/><path d="M9 1.5L9 11.5L3.8 6.5Z"/><path d="M24 1.5L24 11.5L18.8 6.5Z"/><path d="M36 1.5L36 11.5L41.2 6.5Z"/><path d="M52 1.5L52 11.5L57.2 6.5Z"/><rect x="57.4" y="1.5" width="1.6" height="10"/></g></svg>
<svg style="left:83px;top:4px" width="11" height="11" viewBox="0 0 11 11"><path d="M4 0.5h3v3.5h3.5v3h-3.5v3.5h-3v-3.5h-3.5v-3h3.5z" fill="#111"/></svg>
<div class="tab">Лист1</div>
</div>
<div id="stline"></div>
<div id="status">
<div class="t" style="left:11px">Лист 1 из 1</div>
<div class="t" style="left:551px">Базовый</div>
<div class="t" style="left:955px">Сумма=0</div>
<div class="t" style="left:1237px;letter-spacing:-0.35px">100 %</div>
<svg style="left:798px;top:6.5px" width="16" height="12" viewBox="0 0 16 12"><rect x="0" y="3.5" width="11" height="5.5" fill="#8c8c8c"/><path d="M11.5 1.5h3M13 1.5v9M11.5 10.5h3" stroke="#6a6a6a" stroke-width="1" fill="none"/></svg>
<svg style="left:828px;top:5px" width="14" height="13" viewBox="0 0 14 13"><path d="M9.5 1.5h-8v10h8v-3" stroke="#707070" stroke-width="1" fill="none"/><path d="M9.5 3.2v5.6M7.1 4.6l4.8 2.8M11.9 4.6l-4.8 2.8" stroke="#c00000" stroke-width="1.2" fill="none"/></svg>
<svg style="left:1092px;top:3px" width="132" height="18" viewBox="0 0 132 18"><g stroke="#8d8d8d" stroke-width="1.6" fill="none"><path d="M2 9.8h8"/><path d="M16 9.8h98"/><path d="M120 9.8h8M124 5.8v8"/></g><circle cx="64" cy="9.8" r="3.8" fill="#fff" stroke="#8d8d8d" stroke-width="1"/></svg>
</div>
<!-- p_side -->
<div id="vscroll"><div class="split"><i></i></div><div class="thumb"></div></div>
<div id="vsbelow"></div>
<div id="splitter"><div class="h"></div><svg style="left:0;top:301px" width="5" height="9" viewBox="0 0 5 9"><path d="M0.5 0.5L4.5 4.5L0.5 8.5Z" fill="#c9c9c9"/></svg></div>
<div id="sidebar"></div><div id="sbw"></div>
<div id="sideic"><div class="sep"></div><div class="act"></div>
<svg style="left:1253px;top:148px" width="16" height="14" viewBox="0 0 16 14"><g fill="#1e1e1e"><rect x="1" y="1.2" width="12" height="1.7"/><rect x="1" y="4.8" width="12" height="1.7"/><rect x="1" y="8.4" width="12" height="1.7"/><rect x="1" y="11" width="6" height="1.4"/><path d="M8.5 10.8h5l-2.5 2.6z"/></g></svg>
<svg style="left:1251px;top:184px" width="18" height="20" viewBox="0 0 18 20"><rect x="2" y="2" width="14" height="16" fill="#f4f4f4" stroke="#2e2e2e" stroke-width="2"/><g fill="#2e2e2e"><rect x="5" y="5.5" width="2" height="2"/><rect x="8" y="5.5" width="5" height="2"/><rect x="5" y="9.3" width="2" height="2"/><rect x="8" y="9.3" width="5" height="2"/><rect x="5" y="13" width="2" height="2"/><rect x="8" y="13" width="5" height="2"/></g></svg>
<svg style="left:1250px;top:218px" width="20" height="22" viewBox="0 0 20 22"><rect x="2" y="2" width="16" height="18" fill="#e4e4e4" stroke="#3c3c3c" stroke-width="2"/><path d="M4.5 5.5l9.5 11.5h-9.5z" fill="#4a4a4a"/><path d="M6.8 11.5l3.3 3.8h-3.3z" fill="#e4e4e4"/><path d="M10 6.5h6M12.5 10h3.5" stroke="#3c3c3c" stroke-width="1.6"/></svg>
<svg style="left:1249px;top:255px" width="22" height="18" viewBox="0 0 22 18"><path d="M2.8 5.5v11h14.5" stroke="#3a3a3a" stroke-width="1.5" fill="none"/><path d="M4.4 4v10.8h14.5" stroke="#4a4a4a" stroke-width="1" fill="none" opacity="0.8"/><rect x="5.5" y="1.8" width="15" height="11.2" rx="0.8" fill="#2c2c2c"/><path d="M7.5 11.2l3.5-4 2.7 2.2 1.8-1.4 3.5 3.2z" fill="#e8e8e8"/><circle cx="17.3" cy="4.8" r="1.3" fill="#e8e8e8"/></svg>
<svg style="left:1250px;top:289px" width="20" height="20" viewBox="0 0 20 20"><path d="M10 1.4L12.1 4.8L16.1 3.9L15.2 7.9L18.6 10L15.2 12.1L16.1 16.1L12.1 15.2L10 18.6L7.9 15.2L3.9 16.1L4.8 12.1L1.4 10L4.8 7.9L3.9 3.9L7.9 4.8Z" fill="#3a3a3a"/><circle cx="10" cy="10" r="3.6" fill="#d6d6d6"/></svg>
<div class="t" style="left:1248.5px;top:325px;font-size:14.5px;font-style:italic;font-weight:bold;color:#5a5a5a;letter-spacing:0">f(x)</div>
</div>
<!-- p_task -->
<div id="task">
<svg style="left:3px;top:4px" width="22" height="20" viewBox="0 0 22 20"><defs><linearGradient id="mg" x1="0" y1="0" x2="1" y2="1"><stop offset="0" stop-color="#86cc42"/><stop offset="1" stop-color="#c9ec97"/></linearGradient></defs><path d="M1 1h14q6 0 6 6v12h-12.5q-5.5 0-5.5-5.5v-9.5h-2z" fill="#fbfbfb"/><path d="M4.4 2.6h10.4q4.6 0 4.6 4.6v10.2h-10.6q-4.4 0-4.4-4.4z" fill="url(#mg)"/><path d="M6.8 4.6v7.6q0 2.6 2.6 2.6h5q2.6 0 2.6-2.6v-3.2q0-1.8-1.6-1.8t-1.6 1.8v3h-.4v-3q0-1.8-1.6-1.8t-1.6 1.8v3.2" fill="none" stroke="#fff" stroke-width="1.5"/></svg>
<div class="t menu">Меню</div>
<svg style="left:78px;top:5px" width="22" height="18" viewBox="0 0 22 18"><rect x="0.8" y="0" width="20.4" height="2.6" fill="#f0f0f0"/><rect x="0.5" y="3" width="21" height="14.6" rx="0.8" fill="#7ba754"/><rect x="0.5" y="3" width="21" height="7" fill="#93be6a" opacity="0.85"/><rect x="4" y="13" width="14" height="4.6" fill="#486a31"/></svg>
<svg style="left:112px;top:5px" width="18" height="18" viewBox="0 0 18 18"><rect x="0.5" y="0.5" width="17" height="17" rx="2" fill="#e9781c"/><path d="M12 0.5h3.5a2 2 0 0 1 2 2v6z" fill="#f6c21c"/><path d="M17.5 12v3.5a2 2 0 0 1-2 2h-5z" fill="#f2b01e"/><circle cx="10.3" cy="8" r="6.2" fill="#2b6fc4"/><path d="M6 4.5q4-4 8.6-.6q-3 .2-3.6 2.4q-2.4-.4-5-1.8z" fill="#63b9e6"/><path d="M15.8 6q1.6 4.4-1.8 7.2q-3.6 2.6-7.6.4q3.6.6 6-1.2q2.8-2.2 3.4-6.4z" fill="#1b2f9a"/><path d="M1.2 9.5q.8-3.4 3.6-4.6q-.8 1.8 0 3q2-.6 3.4.8q-2.2.2-2.8 1.8q1.8 2.2 5 1.4q-2 3.2-5.6 2.4q-3.4-1-3.6-4.8z" fill="#e9781c"/><path d="M2 6q1.4-3 4-4q-1.2 1.8-.8 3.2q-1.8.2-3.2.8z" fill="#f39a1e"/></svg>
<svg style="left:134px;top:5px" width="18" height="18" viewBox="0 0 18 18"><rect x="0.5" y="0.5" width="17" height="17" rx="2.2" fill="#d9d9d9"/><rect x="2.2" y="2.2" width="13.6" height="13.6" rx="1" fill="#1d1924"/><path d="M4.5 6.5l3.5 2-3.5 2" stroke="#eee" stroke-width="1.3" fill="none"/><rect x="8.5" y="10.8" width="4" height="1.3" fill="#eee"/></svg>
<svg style="left:156px;top:5.5px" width="18" height="18" viewBox="0 0 18 18"><path d="M1 2.5q0-1 1-1h5q1 0 1.3 1l.4 1h-7.7z" fill="#f4f4f4"/><rect x="0.5" y="3.3" width="17" height="2.4" fill="#bdbdbd"/><rect x="0.5" y="5.2" width="17" height="11.6" rx="0.6" fill="#7fae4e"/><rect x="0.5" y="5.2" width="17" height="5" fill="#93c061" opacity="0.8"/></svg>
<svg style="left:178px;top:5px" width="18" height="18" viewBox="0 0 18 18"><rect x="0.6" y="1.2" width="16.8" height="16.3" rx="1.8" fill="#f3f3f0" stroke="#c4c4c4" stroke-width="0.6"/><path d="M3 1.2v2M5.6 1.2v2M8.2 1.2v2M10.8 1.2v2M15.4 1.2v2" stroke="#8c8c8c" stroke-width="1"/><g stroke="#9fb0d8" stroke-width="0.9"><path d="M2.5 6h9M2.5 8.6h8M2.5 11.2h7M2.5 13.8h6M2.5 16h5"/></g><path d="M10.8 2.2l2.6 1.2-4.6 10.6-2.2 1.6-.400-2.7z" fill="#f4a31e"/><path d="M6.6 15.6l-.200-1.5 1.3.6z" fill="#444"/><circle cx="12.3" cy="1.6" r="1.5" fill="#e8484c"/></svg>
<div class="btn" style="left:208.0px"></div>
<svg style="left:210.8px;top:6px" width="16" height="16" viewBox="0 0 18 18"><rect x="0.5" y="0.5" width="17" height="17" rx="2" fill="#e9781c"/><path d="M12 0.5h3.5a2 2 0 0 1 2 2v6z" fill="#f6c21c"/><path d="M17.5 12v3.5a2 2 0 0 1-2 2h-5z" fill="#f2b01e"/><circle cx="10.3" cy="8" r="6.2" fill="#2b6fc4"/><path d="M6 4.5q4-4 8.6-.6q-3 .2-3.6 2.4q-2.4-.4-5-1.8z" fill="#63b9e6"/><path d="M15.8 6q1.6 4.4-1.8 7.2q-3.6 2.6-7.6.4q3.6.6 6-1.2q2.8-2.2 3.4-6.4z" fill="#1b2f9a"/><path d="M1.2 9.5q.8-3.4 3.6-4.6q-.8 1.8 0 3q2-.6 3.4.8q-2.2.2-2.8 1.8q1.8 2.2 5 1.4q-2 3.2-5.6 2.4q-3.4-1-3.6-4.8z" fill="#e9781c"/><path d="M2 6q1.4-3 4-4q-1.2 1.8-.8 3.2q-1.8.2-3.2.8z" fill="#f39a1e"/></svg>
<div class="t lbl" style="left:230.0px">[Mozill...</div>
<div class="btn" style="left:294.6px"></div>
<svg style="left:297.4px;top:6px" width="16" height="16" viewBox="0 0 18 18"><rect x="0.5" y="0.5" width="17" height="17" rx="2" fill="#e9781c"/><path d="M12 0.5h3.5a2 2 0 0 1 2 2v6z" fill="#f6c21c"/><path d="M17.5 12v3.5a2 2 0 0 1-2 2h-5z" fill="#f2b01e"/><circle cx="10.3" cy="8" r="6.2" fill="#2b6fc4"/><path d="M6 4.5q4-4 8.6-.6q-3 .2-3.6 2.4q-2.4-.4-5-1.8z" fill="#63b9e6"/><path d="M15.8 6q1.6 4.4-1.8 7.2q-3.6 2.6-7.6.4q3.6.6 6-1.2q2.8-2.2 3.4-6.4z" fill="#1b2f9a"/><path d="M1.2 9.5q.8-3.4 3.6-4.6q-.8 1.8 0 3q2-.6 3.4.8q-2.2.2-2.8 1.8q1.8 2.2 5 1.4q-2 3.2-5.6 2.4q-3.4-1-3.6-4.8z" fill="#e9781c"/><path d="M2 6q1.4-3 4-4q-1.2 1.8-.8 3.2q-1.8.2-3.2.8z" fill="#f39a1e"/></svg>
<div class="t lbl" style="left:316.6px">[Googl...</div>
<div class="btn" style="left:381.2px"></div>
<svg style="left:384px;top:6px" width="16" height="16" viewBox="0 0 18 18"><rect x="0.5" y="0.5" width="17" height="17" rx="2" fill="#e9781c"/><path d="M12 0.5h3.5a2 2 0 0 1 2 2v6z" fill="#f6c21c"/><path d="M17.5 12v3.5a2 2 0 0 1-2 2h-5z" fill="#f2b01e"/><circle cx="10.3" cy="8" r="6.2" fill="#2b6fc4"/><path d="M6 4.5q4-4 8.6-.6q-3 .2-3.6 2.4q-2.4-.4-5-1.8z" fill="#63b9e6"/><path d="M15.8 6q1.6 4.4-1.8 7.2q-3.6 2.6-7.6.4q3.6.6 6-1.2q2.8-2.2 3.4-6.4z" fill="#1b2f9a"/><path d="M1.2 9.5q.8-3.4 3.6-4.6q-.8 1.8 0 3q2-.6 3.4.8q-2.2.2-2.8 1.8q1.8 2.2 5 1.4q-2 3.2-5.6 2.4q-3.4-1-3.6-4.8z" fill="#e9781c"/><path d="M2 6q1.4-3 4-4q-1.2 1.8-.8 3.2q-1.8.2-3.2.8z" fill="#f39a1e"/></svg>
<div class="t lbl" style="left:403.2px">[Linux ...</div>
<div class="btn" style="left:467.8px"></div>
<svg style="left:470.6px;top:6px" width="16" height="16" viewBox="0 0 18 18"><rect x="0.5" y="0.5" width="17" height="17" rx="2.2" fill="#d9d9d9"/><rect x="2.2" y="2.2" width="13.6" height="13.6" rx="1" fill="#1d1924"/><path d="M4.5 6.5l3.5 2-3.5 2" stroke="#eee" stroke-width="1.3" fill="none"/><rect x="8.5" y="10.8" width="4" height="1.3" fill="#eee"/></svg>
<div class="t lbl" style="left:489.8px">[Termi...</div>
<div class="btn" style="left:554.4px"></div>
<svg style="left:557.2px;top:6px" width="16" height="16" viewBox="0 0 18 18"><path d="M1 2.5q0-1 1-1h5q1 0 1.3 1l.4 1h-7.7z" fill="#f4f4f4"/><rect x="0.5" y="3.3" width="17" height="2.4" fill="#bdbdbd"/><rect x="0.5" y="5.2" width="17" height="11.6" rx="0.6" fill="#7fae4e"/><rect x="0.5" y="5.2" width="17" height="5" fill="#93c061" opacity="0.8"/></svg>
<div class="t lbl" style="left:576.4px">[Загру...</div>
<div class="btn" style="left:641.0px"></div>
<svg style="left:643.8px;top:6px" width="16" height="16" viewBox="0 0 18 18"><rect x="0.5" y="0.5" width="17" height="17" rx="2.2" fill="#d9d9d9"/><rect x="2.2" y="2.2" width="13.6" height="13.6" rx="1" fill="#1d1924"/><path d="M4.5 6.5l3.5 2-3.5 2" stroke="#eee" stroke-width="1.3" fill="none"/><rect x="8.5" y="10.8" width="4" height="1.3" fill="#eee"/></svg>
<div class="t lbl" style="left:663.0px">[Termi...</div>
<div class="btn" style="left:727.6px"></div>
<svg style="left:730.4px;top:6px" width="16" height="16" viewBox="0 0 18 18"><path d="M1 2.5q0-1 1-1h5q1 0 1.3 1l.4 1h-7.7z" fill="#f4f4f4"/><rect x="0.5" y="3.3" width="17" height="2.4" fill="#bdbdbd"/><rect x="0.5" y="5.2" width="17" height="11.6" rx="0.6" fill="#7fae4e"/><rect x="0.5" y="5.2" width="17" height="5" fill="#93c061" opacity="0.8"/></svg>
<div class="t lbl" style="left:749.6px">[Дома...</div>
<div class="btn" style="left:814.2px"></div>
<svg style="left:817px;top:6px" width="16" height="16" viewBox="0 0 18 18"><rect x="0.6" y="1.2" width="16.8" height="16.3" rx="1.8" fill="#f3f3f0" stroke="#c4c4c4" stroke-width="0.6"/><path d="M3 1.2v2M5.6 1.2v2M8.2 1.2v2M10.8 1.2v2M15.4 1.2v2" stroke="#8c8c8c" stroke-width="1"/><g stroke="#9fb0d8" stroke-width="0.9"><path d="M2.5 6h9M2.5 8.6h8M2.5 11.2h7M2.5 13.8h6M2.5 16h5"/></g><path d="M10.8 2.2l2.6 1.2-4.6 10.6-2.2 1.6-.400-2.7z" fill="#f4a31e"/><path d="M6.6 15.6l-.200-1.5 1.3.6z" fill="#444"/><circle cx="12.3" cy="1.6" r="1.5" fill="#e8484c"/></svg>
<div class="t lbl" style="left:836.2px">[autofs...</div>
<div class="btn" style="left:900.8px"></div>
<svg style="left:903.6px;top:6px" width="16" height="16" viewBox="0 0 18 18"><rect x="0.5" y="0.5" width="17" height="17" rx="2" fill="#17a005"/><path d="M3 2.5h6.5l5.5 5.5v7.5h-12z" fill="#f4f4f4"/><path d="M9.5 2.5l5.5 5.5h-5.5z" fill="#0b7502"/><path d="M9.5 2.5l5.5 5.5" stroke="#17a005" stroke-width="1.2"/></svg>
<div class="t lbl" style="left:922.8px;letter-spacing:-0.55px">ALL-SI...</div>
<div class="btn on" style="left:987.4px"></div>
<svg style="left:990.2px;top:6px" width="16" height="16" viewBox="0 0 18 18"><rect x="0.5" y="0.5" width="17" height="17" rx="2" fill="#17a005"/><path d="M3 2.5h6.5l5.5 5.5v7.5h-12z" fill="#f4f4f4"/><path d="M9.5 2.5l5.5 5.5h-5.5z" fill="#0b7502"/><path d="M9.5 2.5l5.5 5.5" stroke="#17a005" stroke-width="1.2"/></svg>
<div class="t lbl" style="left:1009.4px">Без и...</div>
<svg style="left:1081px;top:6px" width="14" height="15" viewBox="0 0 14 15"><rect x="1" y="1" width="12" height="13" rx="1.5" fill="none" stroke="#d8d8d8" stroke-width="1.5"/><circle cx="7" cy="7" r="3" fill="#d8d8d8"/><path d="M7 7l3 4" stroke="#333" stroke-width="1.2"/></svg>
<svg style="left:1100px;top:7px" width="16" height="15" viewBox="0 0 16 15"><circle cx="8" cy="4.5" r="3.5" fill="#d8d8d8"/><path d="M6.5 7.5h3l.5 3q5 .8 5 3h-14q0-2.2 5-3z" fill="#d8d8d8"/></svg>
<svg style="left:1121px;top:8px" width="16" height="13" viewBox="0 0 16 13"><g fill="none" stroke="#d8d8d8" stroke-width="1.7"><path d="M1 4.5q7-6 14 0"/><path d="M3.5 7.3q4.5-3.8 9 0"/><path d="M6 10q2-1.7 4 0"/></g><circle cx="8" cy="11.6" r="1.1" fill="#d8d8d8"/></svg>
<svg style="left:1141px;top:7px" width="16" height="15" viewBox="0 0 16 15"><path d="M1 5h3l3.5-3.5v12l-3.5-3.5h-3z" fill="#d8d8d8"/><g fill="none" stroke="#d8d8d8" stroke-width="1.2"><path d="M9 5q1.5 2.5 0 5"/><path d="M11 3.5q2.5 4 0 8" stroke="#bdbdbd"/><path d="M13 2q3.5 5.5 0 11" stroke="#8a8a8a"/></g></svg>
<svg style="left:1162px;top:6px" width="17" height="17" viewBox="0 0 17 17"><rect x="4" y="0.5" width="4" height="2" fill="#cfcfcf"/><rect x="1.5" y="2.5" width="9" height="12.5" rx="1" fill="#8a8a8a" stroke="#d8d8d8" stroke-width="1.3"/><path d="M12.5 5l-3 5h2.5l-1 4.5 4-6h-2.5z" fill="#e6e6e6" stroke="#444" stroke-width="0.5"/></svg>
<svg style="left:1182px;top:5px" width="18" height="19" viewBox="0 0 18 19"><path d="M9 1q3.5 2 7.5 2q.5 9-7.5 15q-8-6-7.5-15q4 0 7.5-2z" fill="#ececec" stroke="#c4c4c4" stroke-width="0.8"/><path d="M5.5 6l7 7M12.5 6l-7 7" stroke="#dd2c3c" stroke-width="2.6"/></svg>
<svg style="left:1203px;top:7px" width="20" height="14" viewBox="0 0 20 14"><rect x="0" y="0" width="20" height="14" fill="#1c1c1c"/><rect x="1" y="1" width="18" height="12" fill="#f1d5da"/><g fill="#d9536a"><rect x="1" y="1" width="18" height="1.3"/><rect x="1" y="3.6" width="18" height="1.3"/><rect x="1" y="6.2" width="18" height="1.3"/><rect x="1" y="8.8" width="18" height="1.3"/><rect x="1" y="11.4" width="18" height="1.3"/></g><rect x="1" y="1" width="8" height="6.5" fill="#2a3f8f"/></svg>
<div class="t clk">21:33</div>
<svg style="left:1262px;top:8px" width="16" height="14" viewBox="0 0 16 14"><g fill="none" stroke="#c6c6c6" stroke-width="1.5"><rect x="1" y="1" width="10" height="7"/><path d="M13 5h1.5v7.5h-9.5v-2"/></g></svg>
</div>
</div>
</body>
</html>
